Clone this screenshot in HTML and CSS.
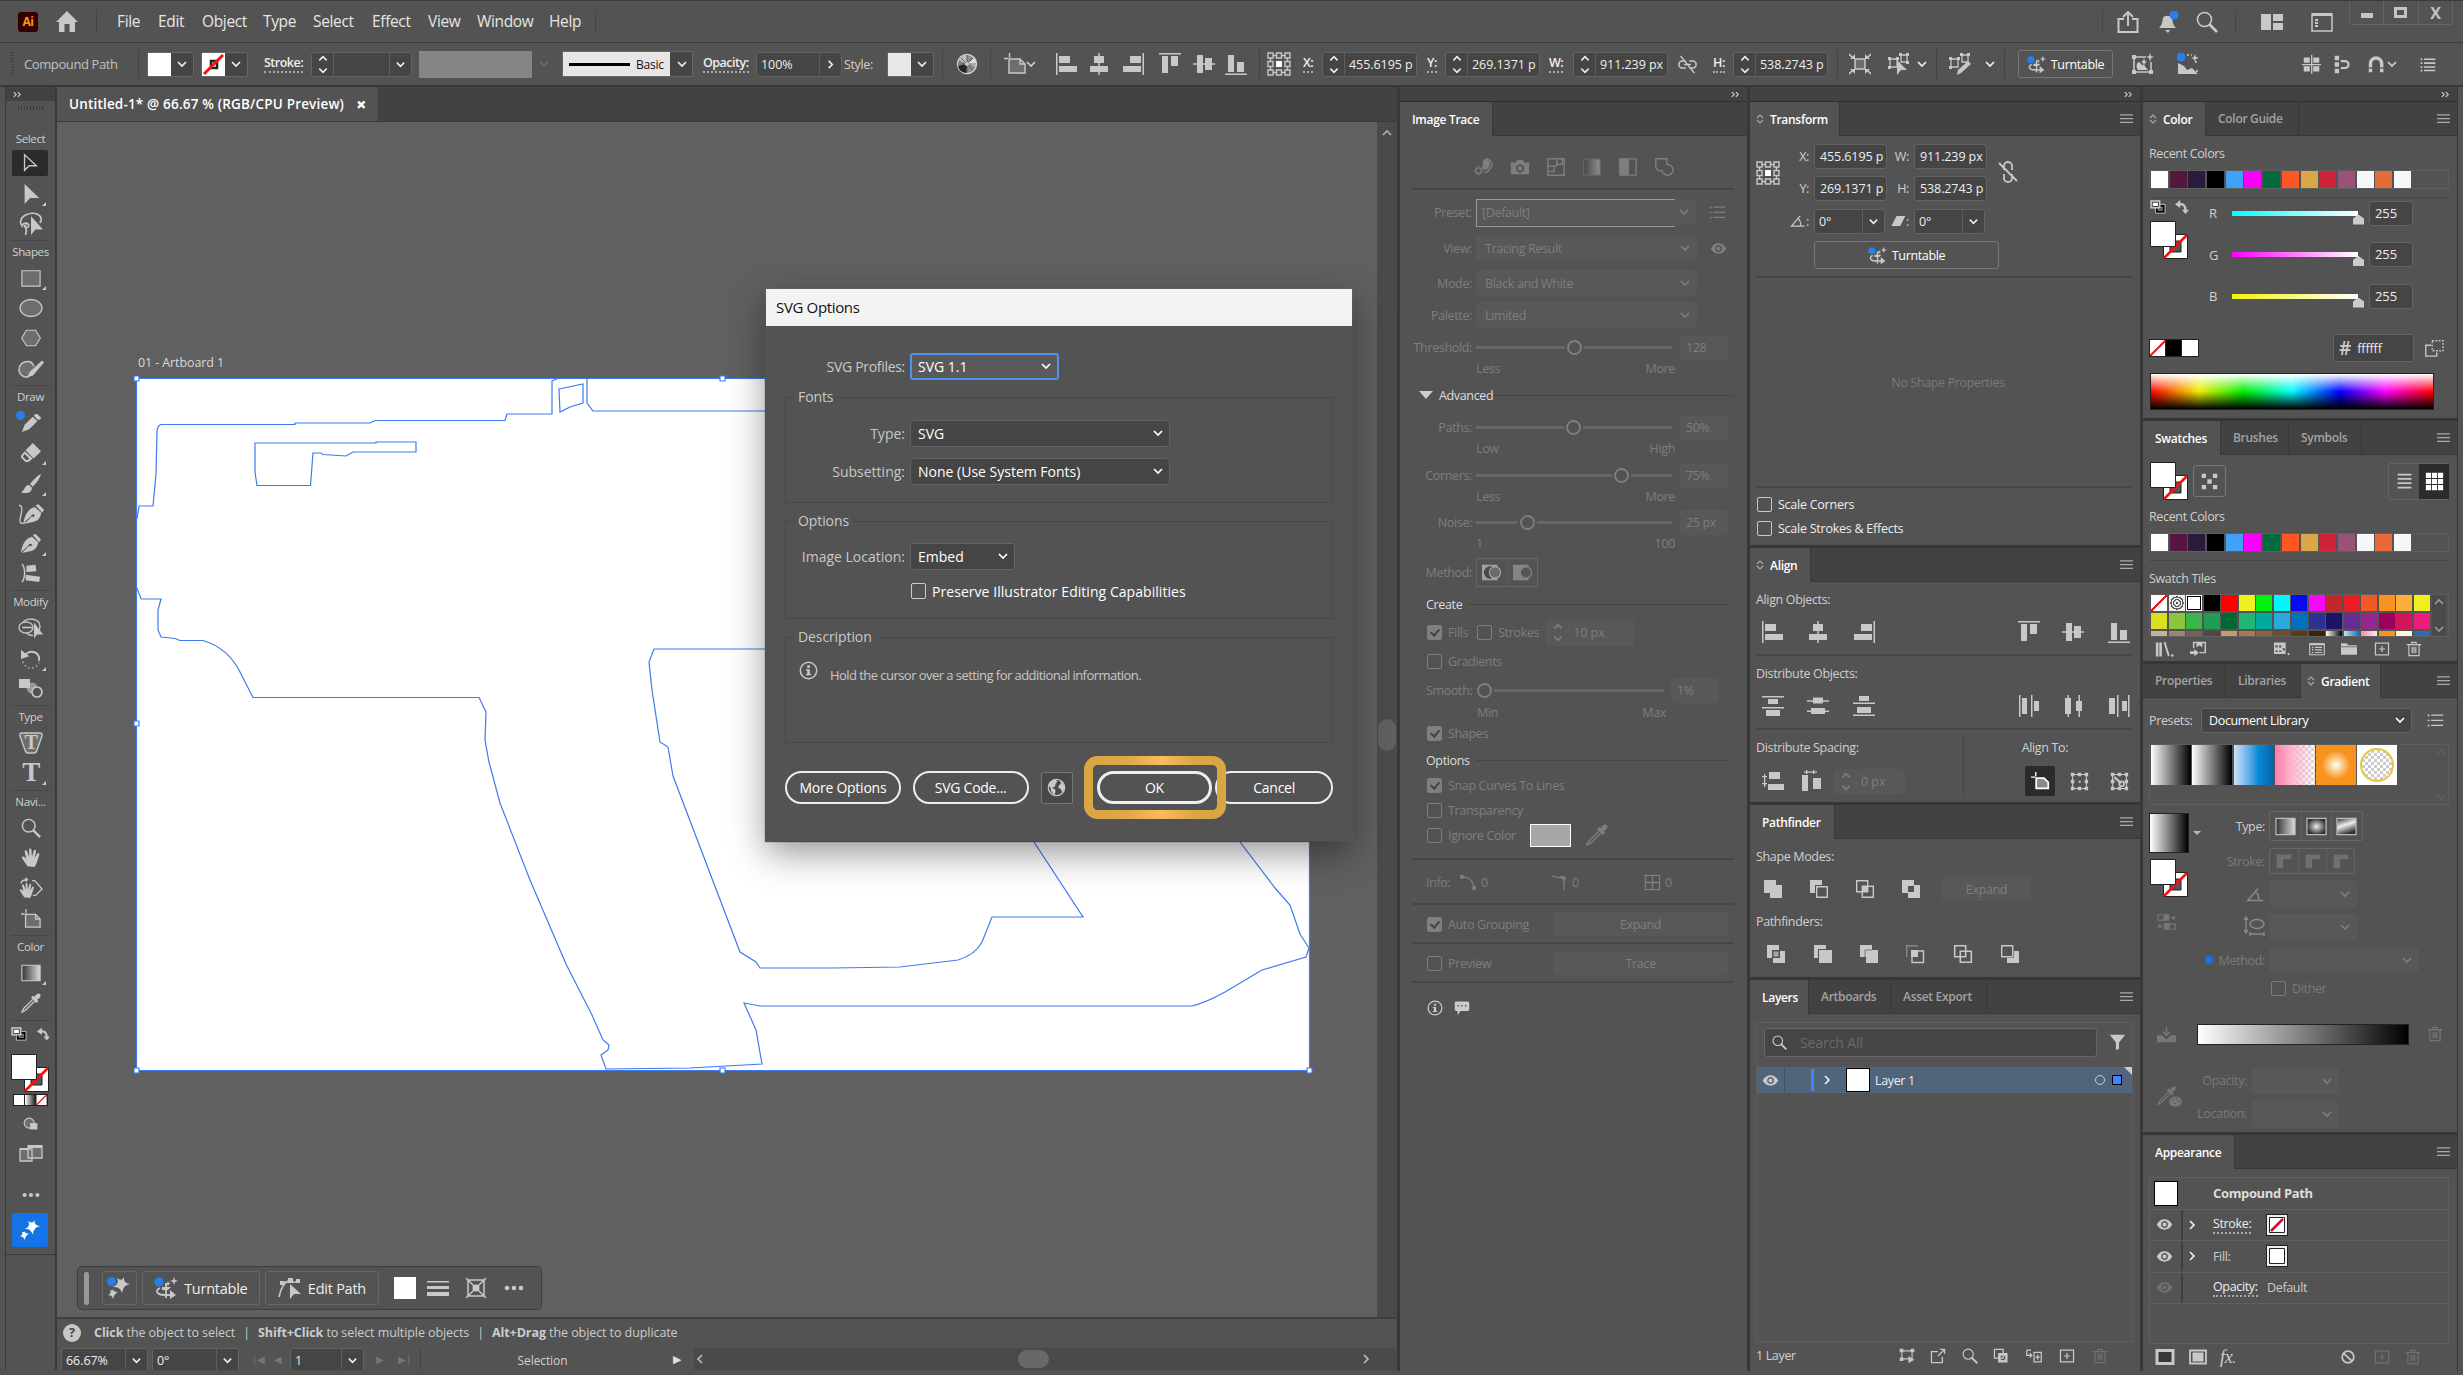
FILE: index.html
```html
<!DOCTYPE html>
<html lang="en">

<head>
<meta charset="utf-8">
<title>Untitled-1* @ 66.67 % (RGB/CPU Preview)</title>
<link rel="stylesheet" href="styles.css">
</head>

<body>

<!-- icon set, all on a 22 grid unless noted -->
<svg class="defs" width="0" height="0">
  <defs>
    <linearGradient id="bw"><stop offset="0" stop-color="#333"/><stop offset="1" stop-color="#ddd"/></linearGradient>
    <radialGradient id="rad"><stop offset="0" stop-color="#eee"/><stop offset="1" stop-color="#333"/></radialGradient>
    <linearGradient id="free" x1="0" y1="0" x2="0.4" y2="1"><stop offset="0" stop-color="#333"/><stop offset=".5" stop-color="#eee"/><stop offset="1" stop-color="#333"/></linearGradient>
    <linearGradient id="gold"><stop offset="0" stop-color="#d8a642"/><stop offset=".3" stop-color="#dfa84a"/><stop offset=".55" stop-color="#fbbb5e"/><stop offset=".8" stop-color="#d8a642"/><stop offset="1" stop-color="#d8a642"/></linearGradient>
  </defs>
  <symbol id="home" viewBox="0 0 22 22"><path d="M11 0 0 11h3v10h5.500v-8h5v8H19V11h3z"/></symbol>
  <symbol id="sel" viewBox="0 0 22 22"><path d="M5 2v17l5-5h8z" fill="none" stroke="currentColor" stroke-width="1.500"/></symbol>
  <symbol id="dsel" viewBox="0 0 22 22"><path d="M4 0v22l6-6.500h10z"/></symbol>
  <symbol id="lasso" viewBox="0 0 22 22"><path d="M2 12C-1 2 12 0 17 2c4 2 4 6 2 8M3 14c-1-4 5-5 6-2 0 3-4 3-4 1 0-1 1-1 2-1M6 14c1 2 1 4 0 7" fill="none" stroke="currentColor" stroke-width="1.500"/><path d="M11 4v17l4-5h7z"/></symbol>
  <symbol id="rect" viewBox="0 0 22 22"><path d="M1 3h20v17H1z" fill="#6e6e6e" stroke="currentColor" stroke-width="1.300"/></symbol>
  <symbol id="ell" viewBox="0 0 24 22"><ellipse cx="12" cy="11" rx="11" ry="8.500" fill="#6e6e6e" stroke="currentColor" stroke-width="1.300"/></symbol>
  <symbol id="hex" viewBox="0 0 22 22"><path d="M6 2.500h10L21.300 11 16 19.500H6L.7 11z" fill="#6e6e6e" stroke="currentColor" stroke-width="1.300"/></symbol>
  <symbol id="shaper" viewBox="0 0 26 22"><path d="M11 18C6 20 1 16 1 11s4-8 9-8c3 0 5 2 6 5" fill="#6e6e6e" stroke="currentColor" stroke-width="1.400"/><path d="m26 4-2-2L12 13l-3 6 6-2z"/></symbol>
  <symbol id="pencil" viewBox="0 0 22 22"><path d="m1 21 3-8L13 4l5 5-9 9zM14 3l2-2h2l4 4v1l-3 2z"/></symbol>
  <symbol id="eraser" viewBox="0 0 22 22"><path d="M13 0 5 8l9 9 8-8zM4 9l-4 5v2l5 5h3l5-4zM4 12l5 5-2 2H6l-4-4z" fill-rule="evenodd"/></symbol>
  <symbol id="brush" viewBox="0 0 22 22"><path d="M22 0c-3 1-8 6-12 11l3 3C18 9 21 4 22 0zM9 12c-5 0-4 5-9 8 5 2 12 1 12-5z"/></symbol>
  <symbol id="pen" viewBox="0 0 22 22"><path d="m13 1 3-1 6 6-2 3zM12 3l7 6c-1 6-4 9-9 10l-9 2 8-8 2 1 1-3-3 0-1 2-8 7C1 13 4 5 12 3z"/></symbol>
  <symbol id="curv" viewBox="0 0 28 22"><g transform="translate(6)"><path d="m13 1 3-1 6 6-2 3zM12 3l7 6c-1 6-4 9-9 10l-9 2 8-8 2 1 1-3-3 0-1 2-8 7C1 13 4 5 12 3z"/></g><path d="M1 1c8 1-2 17 2 19 2 1 4 0 5-1" fill="none" stroke="currentColor" stroke-width="1.400"/></symbol>
  <symbol id="width" viewBox="0 0 22 22"><path d="M1 1c4 4 4 15 0 20" fill="none" stroke="currentColor" stroke-width="1.600"/><path d="m6 3 10-1 1 7-11 1zM5 13l16 2-1 6-15-2z"/></symbol>
  <symbol id="builder" viewBox="0 0 26 22"><ellipse cx="8" cy="11" rx="7" ry="5.500" fill="none" stroke="currentColor" stroke-width="1.300"/><path d="M5 6c3-5 17-5 17 4 0 3-1 4-2 5M9 17c2 2 4 2 6 2M4 11h10" fill="none" stroke="currentColor" stroke-width="1.300"/><path d="M16 6v16l3-4h6z"/></symbol>
  <symbol id="rot" viewBox="0 0 22 22"><path d="M4 8C8 0 21 2 20 13" fill="none" stroke="currentColor" stroke-width="2.200"/><path d="M0 1v10l9-3z"/><path d="M2 14c3 9 14 9 18 1" fill="none" stroke="currentColor" stroke-width="1.500" stroke-dasharray="1.500 3"/></symbol>
  <symbol id="blend" viewBox="0 0 24 22"><path d="M0 2h11v9H0z"/><circle cx="13" cy="11" r="5.500" opacity=".6"/><circle cx="18" cy="15" r="5" fill="#535353" stroke="currentColor" stroke-width="1.700"/></symbol>
  <symbol id="mag" viewBox="0 0 22 22"><circle cx="8.500" cy="8.500" r="7" fill="none" stroke="currentColor" stroke-width="1.600"/><path d="m13 13 8 8" stroke="currentColor" stroke-width="2.600"/></symbol>
  <symbol id="hand" viewBox="0 0 22 22"><path d="M7 20 1 11c0-2 2-2 3-1l2 2L4 4c0-2 2-2 3 0l2 6V2c0-2 2-2 2.500 0l.5 8 2-7c1-2 3-1 2.500 1L15 11l3-5c1-1 3 0 2 2l-3 9-2 4z"/></symbol>
  <symbol id="rotview" viewBox="0 0 26 22"><g transform="translate(0 5) scale(.8)"><path d="M7 20 1 11c0-2 2-2 3-1l2 2L4 4c0-2 2-2 3 0l2 6V2c0-2 2-2 2.500 0l.5 8 2-7c1-2 3-1 2.500 1L15 11l3-5c1-1 3 0 2 2l-3 9-2 4z"/></g><path d="M2 6c1-4 4-4 7-4M7 0l2 2-2 2M14 3l3 0 8 9-7 7h-3" fill="none" stroke="currentColor" stroke-width="1.500"/></symbol>
  <symbol id="artb" viewBox="0 0 22 22"><path d="M5 6h11l5 5v9H5z" fill="#6e6e6e" stroke="currentColor" stroke-width="1.400"/><path d="M16 6v5h5M0 5.500h4M5.500 0v5" fill="none" stroke="currentColor" stroke-width="1.400"/></symbol>
  <symbol id="grad" viewBox="0 0 22 22"><path d="M1 2.500h20v17H1z" fill="url(#bw)" stroke="currentColor" stroke-width="1.300"/></symbol>
  <symbol id="drop" viewBox="0 0 22 22"><path d="M13 7 3 17l-2 4 4-2L15 9" fill="none" stroke="currentColor" stroke-width="1.500"/><path d="m11 5 2-2 2 1c2-4 5-4 6-3s1 4-3 6l1 2-2 2z"/></symbol>
  <symbol id="deffs" viewBox="0 0 18 16"><path d="M6 5h11v10H6z" fill="#000" stroke="#ccc"/><path d="M9 8h5v4H9z" fill="#535353" stroke="#ccc" stroke-width=".6"/><path d="M1 1h10v8H1z" fill="#ddd" stroke="#ccc" stroke-width="1.500"/><path d="M2.500 2.500h7v5h-7z" fill="#fff" stroke="#222"/></symbol>
  <symbol id="swap" viewBox="0 0 16 16"><path d="M4 5c5-1 8 1 8 7" fill="none" stroke="currentColor" stroke-width="2.600"/><path d="M6 0v9L0 5zM8 11h8l-4 5z"/></symbol>
  <symbol id="fs" viewBox="0 0 38 38"><path d="M13.500 13.500h24v24h-24z" fill="#fff" stroke="#222"/><path d="M20 20h11v11H20z" fill="#555" stroke="#222"/><path d="M14 37 37 14" stroke="#f01414" stroke-width="2.600"/><path d="M.5.500h25v25H.5z" fill="#fff" stroke="#222"/></symbol>
  <symbol id="dmode" viewBox="0 0 22 22"><circle cx="9" cy="10" r="5.500" fill="#6e6e6e" stroke="currentColor" stroke-width="1.300"/><path d="M10 10h8v7h-8z"/></symbol>
  <symbol id="screen" viewBox="0 0 24 22"><path d="M1 6h12v12H1zM9 3h14v12H9z" fill="#6e6e6e" stroke="currentColor" stroke-width="1.300"/><path d="M1 5h8v2H1zM9 2h14v3H9z"/></symbol>
  <symbol id="dots" viewBox="0 0 22 22"><circle cx="4" cy="11" r="2.300"/><circle cx="11" cy="11" r="2.300"/><circle cx="18" cy="11" r="2.300"/></symbol>
  <symbol id="spark" viewBox="0 0 22 22"><path d="M16 0Q15 6 22 7 15 8 14 16 12 9 5 10 12 7 9 1 14 5 16 0zM5 12Q5 15 10 15 6 17 5 22 4 18 0 18 4 16 2 13 5 14 5 12z"/></symbol>
  <symbol id="turn" viewBox="0 0 24 22"><path d="M6 11c-5 2-4 7 5 7h7M12 6v15" fill="none" stroke="currentColor" stroke-width="1.800"/><path d="m16 13 6 5-6 4zM8 10h9l-3 3H8z"/><path d="m20 0 1 3 3 1-3 1-1 3-1-3-3-1 3-1zM14 4l.7 2 2 .7-2 .7-.7 2-.7-2-2-.7 2-.7z"/><circle cx="5" cy="5" r="4.500" fill="#2680eb"/></symbol>
  <symbol id="wheel" viewBox="0 0 22 22"><circle cx="11" cy="11" r="9.500" fill="#8c8c8c" stroke="#ccc" stroke-width="1.500"/><path d="M11 11V2a9 9 0 0 0-8 5z" fill="#bbb"/><path d="M11 11 2 13a9 9 0 0 0 8 7z" fill="#222"/><path d="m11 11 7-6a9 9 0 0 1 2 8z" fill="#ddd"/><path d="M11 2v18M2 11h18M5 5l12 12M17 5 5 17" stroke="#444" stroke-width=".7"/><circle cx="11" cy="11" r="2" fill="#ccc"/></symbol>
  <symbol id="al-l" viewBox="0 0 22 22"><path d="M0 0h1.500v22H0zM3 3h11v7H3zM3 13h18v6H3z"/></symbol>
  <symbol id="al-c" viewBox="0 0 22 22"><path d="M10.300 0h1.500v22h-1.500zM6 3h10v7H6zM2 13h18v6H2z"/></symbol>
  <symbol id="al-r" viewBox="0 0 22 22"><path d="M20.500 0H22v22h-1.500zM8 3h11v7H8zM1 13h18v6H1z"/></symbol>
  <symbol id="al-t" viewBox="0 0 22 22"><path d="M0 0h22v1.500H0zM3 3h6v17H3zM12 3h7v10h-7z"/></symbol>
  <symbol id="al-m" viewBox="0 0 22 22"><path d="M0 10.300h22v1.500H0zM4 2h6v18H4zM12 5h7v12h-7z"/></symbol>
  <symbol id="al-b" viewBox="0 0 22 22"><path d="M0 20.500h22V22H0zM3 2h6v17H3zM12 9h7v10h-7z"/></symbol>
  <symbol id="ds-t" viewBox="0 0 22 22"><path d="M0 1h22v1.500H0zM6 4h10v5H6zM0 12h22v1.500H0zM4 15h14v6H4z"/></symbol>
  <symbol id="ds-m" viewBox="0 0 22 22"><path d="M0 5.300h22v1.500H0zM6 2.500h10v6H6zM0 15.500h22V17H0zM4 13h14v6H4z"/></symbol>
  <symbol id="ds-b" viewBox="0 0 22 22"><path d="M0 7.500h22V9H0zM6 1h10v5H6zM0 19.500h22V21H0zM4 12h14v6H4z"/></symbol>
  <symbol id="ds-l" viewBox="0 0 22 22"><path d="M1 0h1.500v22H1zM4 3h5v16H4zM13 0h1.500v22H13zM16 6h5v10h-5z"/></symbol>
  <symbol id="ds-c" viewBox="0 0 22 22"><path d="M5.500 0H7v22H5.500zM3 3h6v16H3zM16.500 0H18v22h-1.500zM14 6h6v10h-6z"/></symbol>
  <symbol id="ds-r" viewBox="0 0 22 22"><path d="M9 0h1.500v22H9zM1 3h6v16H1zM20 0h1.500v22H20zM14 6h5v10h-5z"/></symbol>
  <symbol id="sp-v" viewBox="0 0 22 22"><path d="M7 2h11v7H7zM6 14h16v6H6zM0 6h5v1.300H0zM0 13h5v1.300H0zM2 4h1.300v13H2z"/></symbol>
  <symbol id="sp-h" viewBox="0 0 22 22"><path d="M2 5h6v16H2zM13 8h8v11h-8zM6 0h1.300v4H6zM13 0h1.300v4H13zM4 1.500h13v1.300H4z"/></symbol>
  <symbol id="ref" viewBox="0 0 24 24"><g fill="none" stroke="currentColor" stroke-width="1.400"><path d="M1 1h5v5H1zM9.500 1h5v5h-5zM18 1h5v5h-5zM1 9.500h5v5H1zM18 9.500h5v5h-5zM1 18h5v5H1zM9.500 18h5v5h-5zM18 18h5v5h-5zM6 3.500h3.500M14.500 3.500H18M6 20.500h3.500M14.500 20.500H18M3.500 6v3.500M3.500 14.500V18M20.500 6v3.500M20.500 14.500V18"/></g><path d="M9 9h6v6H9z" fill="#fff"/></symbol>
  <symbol id="unlink" viewBox="0 0 22 22"><path d="M9 7H5a4 4 0 0 0 0 8h4M13 7h4a4 4 0 0 1 0 8h-4M7 11h8M3 1l16 20" fill="none" stroke="currentColor" stroke-width="1.800"/></symbol>
  <symbol id="unlinkv" viewBox="0 0 22 22"><path d="M7 9V5a4 4 0 0 1 8 0v4M7 13v4a4 4 0 0 0 8 0v-4M2 2l18 18" fill="none" stroke="currentColor" stroke-width="1.800"/></symbol>
  <symbol id="iso" viewBox="0 0 22 22"><path d="M6 6h10v10H6z" fill="#6e6e6e" stroke="currentColor" stroke-width="1.500"/><path d="m0 1 4 4M22 1l-4 4M0 21l4-4M22 21l-4-4" stroke="currentColor" stroke-width="1.600"/><path d="M6 6V1L1 6zM16 6V1l5 5zM6 16v5l-5-5zM16 16v5l5-5z"/></symbol>
  <symbol id="selsim" viewBox="0 0 22 22"><path d="M2 6h7v8H2zM13 2h6v7h-6z" fill="none" stroke="currentColor" stroke-width="1.300"/><path d="M0 4h3v3H0zM8 4h3v3H8zM0 13h3v3H0zM11 0h3v3h-3zM18 0h3v3h-3zM18 8h3v3h-3z"/><path d="M9 7v15l4-5h6z"/></symbol>
  <symbol id="editsim" viewBox="0 0 22 22"><path d="M2 6h7v8H2zM13 2h6v7h-6z" fill="none" stroke="currentColor" stroke-width="1.300"/><path d="M0 4h3v3H0zM8 4h3v3H8zM0 13h3v3H0zM11 0h3v3h-3zM18 0h3v3h-3z"/><path d="m19 8 3 3-10 9-4 2 1-5z"/></symbol>
  <symbol id="retype" viewBox="0 0 22 22"><path d="M2 4h12M2 4v15h17V9" fill="none" stroke="currentColor" stroke-width="1.600"/><path d="M0 2h4v4H0zM0 17h4v4H0zM17 17h4v4h-4z"/><path d="M6 9c3 0 3 4 6 3l4 5H6c-2-2-2-5 0-8z"/><path d="m18 0 1 3 3 1-3 1-1 4-1-4-3-1 3-1zM12 5l1 3 2 1-2 1-1 3-1-3-2-1 2-1z"/></symbol>
  <symbol id="mock" viewBox="0 0 22 22"><path d="M1 10v11h20l-6-6-5 2-3-4z"/><path d="M10 2h5M19 8v4M20 17v4" fill="none" stroke="currentColor" stroke-width="1.600" stroke-dasharray="2 2"/><path d="m18 1 1 3 3 1-3 1-1 3-1-3-3-1 3-1z"/><circle cx="4" cy="4" r="4.500" fill="#2680eb"/></symbol>
  <symbol id="snap" viewBox="0 0 22 22"><path d="M2 3h7v6H2zM13 3h7v6h-7zM2 13h7v6H2zM13 13h7v6h-7zM10.500 0H12v22h-1.500zM0 10.500h22V12H0z"/></symbol>
  <symbol id="pix" viewBox="0 0 22 22"><path d="M2 1h5v5H2zM2 8.500h5v5H2zM2 16h5v5H2z"/><path d="M9 7h5a4 4 0 0 1 0 8H9" fill="none" stroke="currentColor" stroke-width="2.500"/></symbol>
  <symbol id="magnet" viewBox="0 0 22 22"><path d="M4 20V10a6 6 0 0 1 13 0v10" fill="none" stroke="currentColor" stroke-width="4"/><path d="M1 15h19" stroke="#535353" stroke-width="1.500"/></symbol>
  <symbol id="list" viewBox="0 0 22 22"><path d="M3 4h2v2H3zM7 4h13v1.800H7zM3 8.500h2v2H3zM7 8.500h13v1.800H7zM3 13h2v2H3zM7 13h13v1.800H7zM3 17h2v2H3zM7 17h13v1.800H7z"/></symbol>
  <symbol id="menu" viewBox="0 0 22 22"><path d="M2 4h2v2H2zM6 4h14v1.500H6zM2 10h2v2H2zM6 10h14v1.500H6zM2 16h2v2H2zM6 16h14v1.500H6z"/></symbol>
  <symbol id="share" viewBox="0 0 22 22"><path d="M7 8H1.500v13h19V8H15M11 15V2M6 6l5-5 5 5" fill="none" stroke="currentColor" stroke-width="2"/></symbol>
  <symbol id="bell" viewBox="0 0 22 22"><path d="M2 17c4-4 3-7 4-10 1-3 8-3 9 0s0 6 4 10zM8 19h5l-2 3z"/><circle cx="17" cy="4" r="4.500" fill="#2680eb"/></symbol>
  <symbol id="work" viewBox="0 0 22 22"><path d="M0 3h10v16H0zM12 3h10v7H12zM12 12h10v7H12z"/></symbol>
  <symbol id="panel" viewBox="0 0 22 22"><path d="M1 3h20v17H1z" fill="none" stroke="currentColor" stroke-width="1.500"/><path d="M1 2h20v3H1zM4 8h3v2H4zM4 11h3v2H4zM4 14h3v2H4z"/></symbol>
  <symbol id="cv" viewBox="0 0 12 12"><path d="m2 4 4 4 4-4" fill="none" stroke="currentColor" stroke-width="1.700"/></symbol>
  <symbol id="cu" viewBox="0 0 12 12"><path d="m2 8 4-4 4 4" fill="none" stroke="currentColor" stroke-width="1.700"/></symbol>
  <symbol id="cr" viewBox="0 0 12 12"><path d="m4 2 4 4-4 4" fill="none" stroke="currentColor" stroke-width="1.700"/></symbol>
  <symbol id="cl" viewBox="0 0 12 12"><path d="M8 2 4 6l4 4" fill="none" stroke="currentColor" stroke-width="1.700"/></symbol>
  <symbol id="ud" viewBox="0 0 8 12"><path d="m1 5 3-3 3 3M1 7l3 3 3-3" fill="none" stroke="currentColor" stroke-width="1.200"/></symbol>
  <symbol id="burger" viewBox="0 0 14 12"><path d="M0 1h14v1.300H0zM0 5h14v1.300H0zM0 9h14v1.300H0z"/></symbol>
  <symbol id="cc" viewBox="0 0 10 8"><path d="m1 1 3 3-3 3M6 1l3 3-3 3" fill="none" stroke="#ddd" stroke-width="1.300"/></symbol>
  <symbol id="auto" viewBox="0 0 22 22"><path d="M10 5c3-6 8-1 7 4s-5 5-8 4" fill="currentColor" stroke="currentColor"/><path d="M13 2c6 0 8 6 6 9s-5 7-8 6" fill="none" stroke="currentColor" stroke-width="1.500"/><circle cx="5" cy="15" r="3" fill="none" stroke="currentColor" stroke-width="1.500"/><path d="M5 9v12M-1 15h12M1 11l8 8M9 11l-8 8" stroke="currentColor" stroke-dasharray="2.500 7"/></symbol>
  <symbol id="cam" viewBox="0 0 22 22"><path fill-rule="evenodd" d="M1 6h5l2-3h6l2 3h5v13H1zM11 8a4.500 4.500 0 1 0 .1 0z"/><circle cx="11" cy="12.500" r="2.500"/></symbol>
  <symbol id="low" viewBox="0 0 22 22"><path d="M2 2h18v18H2zM2 10h10V2M12 8h6V2M9 10v6H2" fill="none" stroke="currentColor" stroke-width="1.600"/></symbol>
  <symbol id="gdim" viewBox="0 0 22 22"><path d="M2 2h18v18H2z" fill="url(#bw)" stroke="currentColor" stroke-width="1.300" opacity=".45"/></symbol>
  <symbol id="bwhite" viewBox="0 0 22 22"><path d="M2 2h18v18H2z" fill="none" stroke="currentColor" stroke-width="1.500"/><path d="M2 2h10v18H2z"/></symbol>
  <symbol id="outl" viewBox="0 0 22 22"><path d="M2 2h12v6c4 0 7 3 7 6s-3 6-6 6-6-2-6-5H5l-3-3z" fill="none" stroke="currentColor" stroke-width="1.600"/></symbol>
  <symbol id="eye" viewBox="0 0 22 22"><path fill-rule="evenodd" d="M2 11c4-8 14-8 18 0-4 8-14 8-18 0zm9-4a4 4 0 1 0 .1 0z"/><circle cx="11" cy="11" r="2.300"/></symbol>
  <symbol id="abut" viewBox="0 0 22 22"><path d="M0 2h18v18H0z" fill="#a0a0a0"/><path d="M13 5a7 7 0 1 0 0 12z" fill="#484848"/><circle cx="15" cy="11" r="6.500" fill="#6a6a6a" stroke="#a0a0a0" stroke-width="1.400"/></symbol>
  <symbol id="over" viewBox="0 0 22 22"><path d="M0 2h18v18H0z" fill="#858585"/><circle cx="15" cy="11" r="6.500" fill="#555" stroke="#858585" stroke-width="1.400"/></symbol>
  <symbol id="curve" viewBox="0 0 18 18"><path d="M3 3c6 0 11 4 12 12" fill="none" stroke="currentColor" stroke-width="1.400"/><path d="M0 1h4v4H0zM13 13h4v4h-4z"/></symbol>
  <symbol id="corner" viewBox="0 0 18 18"><path d="M1 2c6 1 10 4 15 3M13 6c1 4 1 6 1 11" fill="none" stroke="currentColor" stroke-width="1.400"/><path d="M9 2h6v6z"/></symbol>
  <symbol id="cells" viewBox="0 0 18 18"><path d="M1.500 1.500h15v15h-15zM9 1v16M1 9h16" fill="none" stroke="currentColor" stroke-width="1.400"/></symbol>
  <symbol id="info" viewBox="0 0 22 22"><circle cx="11" cy="11" r="9.500" fill="none" stroke="currentColor" stroke-width="1.700"/><path d="M9.500 5h3v3h-3zM8 9.500h4.500V15H14v1.500H8V15h1.500v-4H8z"/></symbol>
  <symbol id="bubble" viewBox="0 0 22 22"><path fill-rule="evenodd" d="M3 2h16q2 0 2 2v9q0 2-2 2H9l-4 6v-6H3q-2 0-2-2V4q0-2 2-2zm2 5v2h2V7zm5 0v2h2V7zm5 0v2h2V7z"/></symbol>
  <symbol id="angle" viewBox="0 0 22 22"><path d="M14 4 2 18h18M11 8c3 2 4 6 4 10" fill="none" stroke="currentColor" stroke-width="1.700"/></symbol>
  <symbol id="shear" viewBox="0 0 22 22"><path d="M9 4h12l-7 14H2z"/></symbol>
  <symbol id="aspect" viewBox="0 0 22 22"><ellipse cx="14" cy="8" rx="7" ry="4.500" fill="none" stroke="currentColor" stroke-width="1.500"/><path d="M3 2v14M1 4l2-3 2 3M1 14l2 3 2-3M7 18h14M7 16v4M21 16v4" fill="none" stroke="currentColor" stroke-width="1.400"/></symbol>
  <symbol id="rev" viewBox="0 0 22 22"><path d="M1 3h12v6H1zM8 13h12v6H8z" fill="none" stroke="currentColor" stroke-width="1.300"/><path d="M7 3h6v6H7zM8 13h6v6H8zM15 5h6l-3 4zM0 17h6l-3-4z"/></symbol>
  <symbol id="al-ab" viewBox="0 0 22 22"><path d="M6 7h9l5 5v7H6z" fill="#8a8a8a" stroke="#fff" stroke-width="2"/><path d="M0 6h5M5.500 0v5" stroke="#fff" stroke-width="1.600"/></symbol>
  <symbol id="al-sel" viewBox="0 0 22 22"><path d="M3 3h16v16H3z" fill="none" stroke="currentColor" stroke-width="1.200"/><path d="M1 1h4v4H1zM9 1h4v4H9zM17 1h4v4h-4zM1 9h4v4H1zM17 9h4v4h-4zM1 17h4v4H1zM9 17h4v4H9zM17 17h4v4h-4zM10 10h2.500v2.500H10z"/></symbol>
  <symbol id="al-key" viewBox="0 0 22 22"><path d="M3 3h16v16H3z" fill="none" stroke="currentColor" stroke-width="1.200"/><path d="M1 1h4v4H1zM9 1h4v4H9zM17 1h4v4h-4zM1 9h4v4H1zM17 9h4v4h-4zM1 17h4v4H1zM9 17h4v4H9zM17 17h4v4h-4z"/><path d="m5 6 8 7" stroke="currentColor" stroke-width="2.500"/><circle cx="13.500" cy="13.500" r="2.800" fill="none" stroke="currentColor" stroke-width="2"/></symbol>
  <symbol id="p-unite" viewBox="0 0 22 22"><path d="M2 2h12v5h6v13H8v-5H2z"/></symbol>
  <symbol id="p-minus" viewBox="0 0 22 22"><path d="M2 2h12v5H7v8H2z"/><path d="M8.700 8.700h10.600v10.600H8.700z" fill="none" stroke="currentColor" stroke-width="1.400"/></symbol>
  <symbol id="p-inter" viewBox="0 0 22 22"><path d="M2.700 2.700h11v11h-11zM8.300 8.300h11v11h-11z" fill="none" stroke="currentColor" stroke-width="1.400"/><path d="M8 8h6v6H8z"/></symbol>
  <symbol id="p-excl" viewBox="0 0 22 22"><path fill-rule="evenodd" d="M2 2h12v5h6v13H8v-5H2zm6 6v6h6V8z"/></symbol>
  <symbol id="p-div" viewBox="0 0 22 22"><path d="M2 2h12v5H7v8H2zM15 8h5v12H8v-5h7z"/><path d="M8.500 8.500h5v5h-5z" opacity=".7"/></symbol>
  <symbol id="p-trim" viewBox="0 0 22 22"><path d="M2 2h12v4H6v9H2z"/><path d="M7 7h13v13H7z"/></symbol>
  <symbol id="p-merge" viewBox="0 0 22 22"><path d="M2 2h12v5h6v13H8v-6H2z"/><path d="M7 15V7h7" fill="none" stroke="#535353" stroke-width=".7"/></symbol>
  <symbol id="p-crop" viewBox="0 0 22 22"><path d="M2.700 14V2.700H14" fill="none" stroke="#888" stroke-width="1.400"/><path d="M14 8h5.500v11.500H8V14" fill="none" stroke="currentColor" stroke-width="1.400"/><path d="M7 7h7v7H7z"/></symbol>
  <symbol id="p-out" viewBox="0 0 22 22"><path d="M2.700 2.700h11v11h-11zM8.300 8.300h11v11h-11z" fill="none" stroke="currentColor" stroke-width="1.600"/></symbol>
  <symbol id="p-back" viewBox="0 0 22 22"><path d="M2.700 2.700h11v11h-11z" fill="none" stroke="currentColor" stroke-width="1.400"/><path d="M15 8h5v12H8v-5h7z"/></symbol>
  <symbol id="funnel" viewBox="0 0 22 22"><path d="M1 1h20l-8 10v8l-4 2V11z"/></symbol>
  <symbol id="trash" viewBox="0 0 22 22"><path d="M4 6v14h14V6M1 5h20M8 4V2h6v2M8.500 8v9M11 8v9M13.500 8v9" fill="none" stroke="currentColor" stroke-width="1.600"/></symbol>
  <symbol id="plus" viewBox="0 0 22 22"><path d="M2 3h18v16H2zM11 7v8M7 11h8" fill="none" stroke="currentColor" stroke-width="1.700"/></symbol>
  <symbol id="folder" viewBox="0 0 22 22"><path d="M0 3h8l2 3h12v13H0z"/><path d="M0 8h22" stroke="#535353"/></symbol>
  <symbol id="opts" viewBox="0 0 22 22"><path d="M1 4h20v15H1z" fill="none" stroke="currentColor" stroke-width="1.500"/><path d="M1 3h20v3H1zM4 8h2v2H4zM8 8h10v1.500H8zM4 11h2v2H4zM8 11.500h10V13H8zM4 15h2v2H4zM8 15h10v1.500H8z"/></symbol>
  <symbol id="kinds" viewBox="0 0 22 22"><path fill-rule="evenodd" d="M0 2h16v16H0zm2 7h3V6H2zm5 0h3V6H7zm5 4h3v-3h-3zM2 15h3v-2H2zm5 0h3v-2H7z"/><circle cx="20" cy="18" r="1.500"/></symbol>
  <symbol id="libs" viewBox="0 0 22 22"><path d="M1 3h3v16H1zM5 3h3v16H5zM10 3l2-1 5 16-2 1z"/><circle cx="20" cy="18" r="1.500"/></symbol>
  <symbol id="addlib" viewBox="0 0 22 22"><path d="M5 10V2h16v14h-8" fill="none" stroke="currentColor" stroke-width="2"/><path d="M9 2h8v7l-4-3-4 3zM0 14h6v-3l6 5-6 5v-3H0z"/></symbol>
  <symbol id="cube" viewBox="0 0 22 22"><path d="M8 8H2v12h12v-4" fill="none" stroke="currentColor" stroke-width="1.500"/><path d="M9 3h12v11H9z" fill="none" stroke="currentColor" stroke-width="1.500" stroke-dasharray="2 1.600"/></symbol>
  <symbol id="kuler" viewBox="0 0 22 22"><path d="M2 2h5v5H2zM15 2h5v5h-5zM8.500 8.500h5v5h-5zM2 15h5v5H2zM15 15h5v5h-5z"/></symbol>
  <symbol id="lines" viewBox="0 0 22 22"><path d="M3 2h16v2H3zM3 7h16v2H3zM3 12h16v2H3zM3 17h16v2H3z"/></symbol>
  <symbol id="nine" viewBox="0 0 22 22"><path d="M1 1h6v6H1zM8 1h6v6H8zM15 1h6v6h-6zM1 8h6v6H1zM8 8h6v6H8zM15 8h6v6h-6zM1 15h6v6H1zM8 15h6v6H8zM15 15h6v6h-6z"/></symbol>
  <symbol id="down" viewBox="0 0 22 22"><path d="M0 12h6l5 5 5-5h6v8H0z"/><path d="M11 2v9M7 8l4 4 4-4" fill="none" stroke="currentColor" stroke-width="1.700"/></symbol>
  <symbol id="picker" viewBox="0 0 28 24"><g transform="scale(.95)"><path d="M13 7 3 17l-2 4 4-2L15 9" fill="none" stroke="currentColor" stroke-width="1.500"/><path d="m11 5 2-2 2 1c2-4 5-4 6-3s1 4-3 6l1 2-2 2z"/></g><ellipse cx="20" cy="17" rx="7" ry="5.500"/><path d="M16 15h2M20 14h2M23 17h2M18 19h2" stroke="#535353" stroke-width="1.500"/></symbol>
  <symbol id="slash" viewBox="0 0 20 20"><path d="M0 0h20v20H0z" fill="#fff"/><path d="M0 20 20 0" stroke="#f01414" stroke-width="2.500"/></symbol>
  <symbol id="noline" viewBox="0 0 23 23"><path d="M0 0h23v23H0z" fill="#fff"/><path d="M9 8h6v7H9z" fill="none" stroke="#222" stroke-width="2.500"/><path d="M2 21 21 2" stroke="#f01414" stroke-width="3"/></symbol>
  <symbol id="sq" viewBox="0 0 22 22"><path d="M3 4.500h16v13H3z" fill="#383838" stroke="currentColor" stroke-width="3"/></symbol>
  <symbol id="sqf" viewBox="0 0 22 22"><path d="M3 4.500h16v13H3z" fill="none" stroke="currentColor" stroke-width="1.800"/><path d="M5.500 6.500h11v9h-11z"/></symbol>
  <symbol id="nope" viewBox="0 0 22 22"><circle cx="11" cy="11" r="8" fill="none" stroke="currentColor" stroke-width="2.400"/><path d="m5 6 12 11" stroke="currentColor" stroke-width="2.400"/></symbol>
  <symbol id="globe" viewBox="0 0 22 22"><circle cx="11" cy="11" r="9.500" fill="none" stroke="currentColor" stroke-width="1.400"/><path d="M3 5 9 1l3 3-2 3-1 3-3 1 4 3-1 6-4-4-1-5-2-2zM15 3l5 5 1 4-3 5-2-4-3-2 1-3 2-1z"/></symbol>
  <symbol id="export" viewBox="0 0 22 22"><path d="M11 5H2v15h15v-8M11 11l9-9M14 2h6v6" fill="none" stroke="currentColor" stroke-width="1.800"/></symbol>
  <symbol id="mask" viewBox="0 0 22 22"><path d="M2 2h12v12H2z" fill="none" stroke="currentColor" stroke-width="1.700"/><path fill-rule="evenodd" d="M7 7h13v13H7zm6.500 3a3.500 3.500 0 1 0 .1 0z"/></symbol>
  <symbol id="sublayer" viewBox="0 0 22 22"><path d="M1 3v7h7M5 7l3 3-3 3M1 3h6M11 6h10v13H11zM16 9v7M13 12.500h6" fill="none" stroke="currentColor" stroke-width="1.700"/></symbol>
  <symbol id="collect" viewBox="0 0 22 22"><path d="M4 4h14v11H4z" fill="none" stroke="currentColor" stroke-width="1.500"/><path d="M1 1h5v5H1zM16 1h5v5h-5zM1 13h5v5H1zM13 11l8 5-8 5z"/></symbol>
  <symbol id="editp" viewBox="0 0 24 22"><path d="M1 20C3 10 6 5 12 3M5 5h14" fill="none" stroke="currentColor" stroke-width="1.600"/><path d="M10 1h5v5h-5zM2 4h4v4H2zM18 2h4v4h-4zM12 7v15l4-5h7z"/></symbol>
  <symbol id="wts" viewBox="0 0 22 22"><path d="M0 4h22v1.500H0zM0 9h22v3H0zM0 15h22v4H0z"/></symbol>
  <symbol id="cross" viewBox="0 0 22 22"><path d="M3 3h16v16H3zM1 1l20 20M1 21 21 1" fill="none" stroke="currentColor" stroke-width="1.500"/><circle cx="11" cy="11" r="3.500"/></symbol>
</svg>

<header class="titlebar">
  <b class="ai">Ai</b>
  <svg class="i"><use href="#home"/></svg>
  <i class="vr"></i>
  <span>File</span><span>Edit</span><span>Object</span><span>Type</span><span>Select</span><span>Effect</span><span>View</span><span>Window</span><span>Help</span>
  <i class="vr"></i>
  <i class="vr"></i>
  <svg class="i"><use href="#share"/></svg>
  <svg class="i"><use href="#bell"/></svg>
  <svg class="i"><use href="#mag"/></svg>
  <i class="vr"></i>
  <svg class="i"><use href="#work"/></svg>
  <svg class="i"><use href="#panel"/></svg>
  <div class="winbtns"><span><i class="min"></i></span><span><i class="max"></i></span><span>X</span></div>
</header>

<div class="control">
  <i class="grip"></i>
  <span class="lbl">Compound Path</span>
  <i class="vr"></i>
  <div class="combo"><i class="chip white"></i><svg class="c"><use href="#cv"/></svg></div>
  <div class="combo"><svg class="chip"><use href="#noline"/></svg><svg class="c"><use href="#cv"/></svg></div>
  <u class="dot">Stroke:</u>
  <div class="spin w101"><em><svg><use href="#cu"/></svg><svg><use href="#cv"/></svg></em><span></span><svg class="c cell"><use href="#cv"/></svg></div>
  <div class="varw"><i></i><svg class="c dim"><use href="#cv"/></svg></div>
  <div class="basic"><div><i></i>Basic</div><svg class="c"><use href="#cv"/></svg></div>
  <u class="dot">Opacity:</u>
  <div class="spin w86"><span>100%</span><svg class="c cell"><use href="#cr"/></svg></div>
  <span>Style:</span>
  <div class="combo"><i class="chip light"></i><svg class="c"><use href="#cv"/></svg></div>
  <i class="vr"></i>
  <svg class="i"><use href="#wheel"/></svg>
  <i class="vr"></i>
  <div class="pair doc-set"><svg class="i"><use href="#artb"/></svg><svg class="c"><use href="#cv"/></svg></div>
  <svg class="i"><use href="#al-l"/></svg>
  <svg class="i"><use href="#al-c"/></svg>
  <svg class="i"><use href="#al-r"/></svg>
  <svg class="i"><use href="#al-t"/></svg>
  <svg class="i"><use href="#al-m"/></svg>
  <svg class="i"><use href="#al-b"/></svg>
  <i class="vr"></i>
  <svg class="i24"><use href="#ref"/></svg>
  <u class="dot">X:</u>
  <div class="spin"><em><svg><use href="#cu"/></svg><svg><use href="#cv"/></svg></em><span>455.6195 p</span></div>
  <u class="dot">Y:</u>
  <div class="spin"><em><svg><use href="#cu"/></svg><svg><use href="#cv"/></svg></em><span>269.1371 p</span></div>
  <u class="dot">W:</u>
  <div class="spin"><em><svg><use href="#cu"/></svg><svg><use href="#cv"/></svg></em><span>911.239 px</span></div>
  <svg class="i20"><use href="#unlink"/></svg>
  <u class="dot">H:</u>
  <div class="spin"><em><svg><use href="#cu"/></svg><svg><use href="#cv"/></svg></em><span>538.2743 p</span></div>
  <i class="vr"></i>
  <svg class="i"><use href="#iso"/></svg>
  <div class="pair"><svg class="i"><use href="#selsim"/></svg><svg class="c lit"><use href="#cv"/></svg></div>
  <i class="vr"></i>
  <div class="pair wide"><svg class="i"><use href="#editsim"/></svg><svg class="c lit"><use href="#cv"/></svg></div>
  <i class="vr"></i>
  <div class="turnbtn"><svg class="i20"><use href="#turn"/></svg>Turntable</div>
  <svg class="i"><use href="#retype"/></svg>
  <svg class="i"><use href="#mock"/></svg>
  <svg class="i20"><use href="#snap"/></svg>
  <svg class="i20"><use href="#pix"/></svg>
  <div class="pair tight"><svg class="i20"><use href="#magnet"/></svg><svg class="c"><use href="#cv"/></svg></div>
  <svg class="i20"><use href="#list"/></svg>
</div>

<main>

<aside class="tools">
  <div class="toolhead"><svg class="cc"><use href="#cc"/></svg></div>
  <div class="toolgrip"></div>
  <div class="toolgrid stack">
    <p>Select</p>
    <div class="on"><svg class="i"><use href="#sel"/></svg></div>
    <div class="fly"><svg class="i"><use href="#dsel"/></svg></div>
    <div><svg class="i24"><use href="#lasso"/></svg></div>
    <div class="sep"></div>
    <p>Shapes</p>
    <div class="fly"><svg class="i"><use href="#rect"/></svg></div>
    <div><svg class="i24"><use href="#ell"/></svg></div>
    <div><svg class="i"><use href="#hex"/></svg></div>
    <div><svg class="i26"><use href="#shaper"/></svg></div>
    <div class="sep"></div>
    <p>Draw</p>
    <div class="new"><svg class="i"><use href="#pencil"/></svg></div>
    <div class="fly"><svg class="i"><use href="#eraser"/></svg></div>
    <div class="fly"><svg class="i"><use href="#brush"/></svg></div>
    <div><svg class="i26"><use href="#curv"/></svg></div>
    <div class="fly"><svg class="i"><use href="#pen"/></svg></div>
    <div><svg class="i"><use href="#width"/></svg></div>
    <div class="sep"></div>
    <p>Modify</p>
    <div><svg class="i26"><use href="#builder"/></svg></div>
    <div class="fly"><svg class="i"><use href="#rot"/></svg></div>
    <div><svg class="i24"><use href="#blend"/></svg></div>
    <div class="sep"></div>
    <p>Type</p>
    <div><svg class="i24" viewBox="0 0 24 22"><path d="M3 1h18c2 0 2.500 1 2 3l-5 14c-.5 2-1 3-3 3H9c-2 0-2.500-1-3-3L1 4C.5 2 1 1 3 1z" fill="#6e6e6e" stroke="currentColor" stroke-width="1.400"/><text x="12" y="17" class="glyph" font-size="20">T</text></svg></div>
    <div class="fly"><svg class="i24" viewBox="0 0 24 22"><text x="12" y="19" class="glyph" font-size="27">T</text></svg></div>
    <div class="sep"></div>
    <p>Navi...</p>
    <div><svg class="i"><use href="#mag"/></svg></div>
    <div><svg class="i"><use href="#hand"/></svg></div>
    <div><svg class="i24"><use href="#rotview"/></svg></div>
    <div><svg class="i"><use href="#artb"/></svg></div>
    <div class="sep"></div>
    <p>Color</p>
    <div class="fly"><svg class="i"><use href="#grad"/></svg></div>
    <div><svg class="i"><use href="#drop"/></svg></div>
    <div class="sep"></div>
    <div class="defswap"><svg><use href="#deffs"/></svg><svg><use href="#swap"/></svg></div>
    <div><svg class="fs"><use href="#fs"/></svg></div>
    <div class="strip"><i class="white"></i><i class="fade"></i><svg><use href="#slash"/></svg></div>
    <div><svg class="i"><use href="#dmode"/></svg></div>
    <div><svg class="i24"><use href="#screen"/></svg></div>
    <div><svg class="i"><use href="#dots"/></svg></div>
    <div class="aibtn"><svg class="i"><use href="#spark"/></svg></div>
  </div>
</aside>

<section class="doc">
  <div class="doctabs"><div class="doctab">Untitled-1* @ 66.67 % (RGB/CPU Preview)<b>×</b></div></div>
  <div class="docrow">
    <div class="canvas">
      <svg class="art" viewBox="57 122 1320 1192">
        <text x="138" y="367" class="abname">01 - Artboard 1</text>
        <path d="M136.500 378.500h1173v692h-1173z" fill="#fff" stroke="#4d4d4d"/>
        <g fill="none" stroke="#3f7af0" stroke-width="1.200">
          <path d="M136.500 378.500h1173v692h-1173z"/>
          <path d="M137 519 139 506H153L156 474 157 432Q157 426 161 424.500H295V423H370L375 420.500H505L507 414H552V381L558 378.500H587V403L593 411H800"/>
          <path d="M559 389 583 384V403L570 407 560 412Z"/>
          <path d="M255 443H376V442H416V452H353L346 456 323 454.500 321 453H313L310.500 485.500H257L255 472Z"/>
          <path d="M137 588 141 599H161L158 610V630L161 637 175 638.500 180 640.500H203Q228 648 240 672L253 697.500H479L486 712 485 740 489 762 500 803 530 880 566 964 592 1015 603 1040 609 1045 608 1050 601 1055 606 1069 690 1068 762 1064 756 1030 744 1003 760 1006H1192Q1205 1003 1225 992L1262 970 1306 957 1309 948 1300 934 1290 905 1275 888 1240 842"/>
          <path d="M766 649H654L649 662 652 690 660 742 668 747 673 776 740 952 756 962 760 968H833L900 967 958 960Q975 955 982 942L992 917H1083L1034 842"/>
          <g fill="#fff"><path d="M134 376h5v5h-5zM720 376h5v5h-5zM134 721h5v5h-5zM134 1068h5v5h-5zM720 1068h5v5h-5zM1307 1068h5v5h-5zM1307 721h5v5h-5z"/></g>
        </g>
      </svg>
      <div class="ctxbar">
        <i class="handle"></i>
        <div class="btn"><svg class="i"><use href="#spark"/></svg></div>
        <div class="btn"><svg class="i24"><use href="#turn"/></svg>Turntable</div>
        <div class="btn"><svg class="i24"><use href="#editp"/></svg>Edit Path</div>
        <i class="white sw"></i>
        <svg class="i"><use href="#wts"/></svg>
        <svg class="i"><use href="#cross"/></svg>
        <svg class="i"><use href="#dots"/></svg>
      </div>
    </div>
    <div class="vscroll"><svg class="c"><use href="#cu"/></svg><i></i><svg class="c"><use href="#cv"/></svg></div>
  </div>
  <div class="hint"><b class="q">?</b><span><b>Click</b> the object to select</span><i>|</i><span><b>Shift+Click</b> to select multiple objects</span><i>|</i><span><b>Alt+Drag</b> the object to duplicate</span></div>
  <div class="status">
    <div class="spin sz"><span>66.67%</span><svg class="c cell"><use href="#cv"/></svg></div>
    <div class="spin sr"><span>0°</span><svg class="c cell"><use href="#cv"/></svg></div>
    <span class="nav">|◀</span><span class="nav">◀</span>
    <div class="spin sa"><span>1</span><svg class="c cell"><use href="#cv"/></svg></div>
    <span class="nav">▶</span><span class="nav">▶|</span>
    <span class="mode">Selection</span>
    <span class="play">▶</span>
    <div class="hscroll"><svg class="c"><use href="#cl"/></svg><i></i><svg class="c"><use href="#cr"/></svg></div>
  </div>
</section>

<div class="dock d1">
  <div class="dockhead"><svg class="cc"><use href="#cc"/></svg></div>
  <section class="panel trace">
    <div class="tabs"><b class="tab act w93">Image Trace</b></div>
    <div class="stack body">
      <div class="presets"><svg class="i"><use href="#auto"/></svg><svg class="i"><use href="#cam"/></svg><svg class="i"><use href="#low"/></svg><svg class="i"><use href="#gdim"/></svg><svg class="i"><use href="#bwhite"/></svg><svg class="i"><use href="#outl"/></svg></div>
      <div class="sep"></div>
      <div class="frm"><label>Preset:</label><div class="dd foc">[Default]<svg class="c"><use href="#cv"/></svg></div><svg class="i20"><use href="#menu"/></svg></div>
      <div class="frm"><label>View:</label><div class="dd">Tracing Result<svg class="c"><use href="#cv"/></svg></div><svg class="i20"><use href="#eye"/></svg></div>
      <div class="frm"><label>Mode:</label><div class="dd">Black and White<svg class="c"><use href="#cv"/></svg></div></div>
      <div class="frm"><label>Palette:</label><div class="dd">Limited<svg class="c"><use href="#cv"/></svg></div></div>
      <div class="frm"><label>Threshold:</label><div class="rail"><i class="k50"></i></div><div class="val">128</div></div>
      <div class="ends"><span>Less</span><span>More</span></div>
      <div class="head adv"><i class="tri"></i>Advanced</div>
      <div class="frm"><label>Paths:</label><div class="rail"><i class="k49"></i></div><div class="val">50%</div></div>
      <div class="ends"><span>Low</span><span>High</span></div>
      <div class="frm"><label>Corners:</label><div class="rail"><i class="k74"></i></div><div class="val">75%</div></div>
      <div class="ends"><span>Less</span><span>More</span></div>
      <div class="frm"><label>Noise:</label><div class="rail"><i class="k26"></i></div><div class="val">25 px</div></div>
      <div class="ends"><span>1</span><span>100</span></div>
      <div class="frm"><label>Method:</label><div class="two"><i><svg class="i20"><use href="#abut"/></svg></i><i><svg class="i20"><use href="#over"/></svg></i></div></div>
      <div class="head in">Create</div>
      <div class="in"><i class="cb ck"></i>Fills<i class="cb gap"></i>Strokes<div class="spin off"><em><svg><use href="#cu"/></svg><svg><use href="#cv"/></svg></em><span>10 px</span></div></div>
      <div class="in"><i class="cb"></i>Gradients</div>
      <div class="in smooth"><span>Smooth:</span><div class="rail"><i class="k0"></i></div><div class="val">1%</div></div>
      <div class="ends sm"><span>Min</span><span>Max</span></div>
      <div class="in"><i class="cb ck"></i>Shapes</div>
      <div class="head in">Options</div>
      <div class="in"><i class="cb ck"></i>Snap Curves To Lines</div>
      <div class="in"><i class="cb"></i>Transparency</div>
      <div class="in"><i class="cb"></i>Ignore Color<i class="ign"></i><svg class="i"><use href="#drop"/></svg></div>
      <div class="sep"></div>
      <div class="in infos"><span>Info:</span><span><svg><use href="#curve"/></svg>0</span><span><svg><use href="#corner"/></svg>0</span><span><svg><use href="#cells"/></svg>0</span></div>
      <div class="sep"></div>
      <div class="in split"><i class="cb ck"></i>Auto Grouping<div class="big">Expand</div></div>
      <div class="sep"></div>
      <div class="in split"><i class="cb"></i>Preview<div class="big">Trace</div></div>
      <div class="sep"></div>
      <div class="in foot"><svg class="i18"><use href="#info"/></svg><svg class="i18"><use href="#bubble"/></svg></div>
    </div>
  </section>
</div>

<div class="dock d2">
  <div class="dockhead"><svg class="cc"><use href="#cc"/></svg></div>
  <section class="panel transform">
    <div class="tabs"><b class="tab act w89"><svg class="ud"><use href="#ud"/></svg>Transform</b><svg class="burger"><use href="#burger"/></svg></div>
    <div class="stack body">
      <div class="xy">
        <svg class="i24"><use href="#ref"/></svg>
        <div class="xyf">
          <label>X:</label><div class="fld">455.6195 p</div><label>W:</label><div class="fld">911.239 px</div>
          <label>Y:</label><div class="fld">269.1371 p</div><label>H:</label><div class="fld">538.2743 p</div>
          <label><svg class="i18"><use href="#angle"/></svg>:</label><div class="spin w71"><span>0°</span><svg class="c cell"><use href="#cv"/></svg></div><label><svg class="i18"><use href="#shear"/></svg>:</label><div class="spin w71"><span>0°</span><svg class="c cell"><use href="#cv"/></svg></div>
        </div>
        <svg class="i"><use href="#unlinkv"/></svg>
      </div>
      <div class="tt"><div class="turnbtn"><svg class="i20"><use href="#turn"/></svg>Turntable</div></div>
      <div class="sep"></div>
      <div class="noshape">No Shape Properties</div>
      <div class="sep"></div>
      <div class="chk"><i class="cb"></i>Scale Corners</div>
      <div class="chk"><i class="cb"></i>Scale Strokes &amp; Effects</div>
    </div>
  </section>
  <section class="panel align">
    <div class="tabs"><b class="tab act w61"><svg class="ud"><use href="#ud"/></svg>Align</b><svg class="burger"><use href="#burger"/></svg></div>
    <div class="stack body">
      <div>Align Objects:</div>
      <div class="six"><svg class="i"><use href="#al-l"/></svg><svg class="i"><use href="#al-c"/></svg><svg class="i"><use href="#al-r"/></svg><svg class="i"><use href="#al-t"/></svg><svg class="i"><use href="#al-m"/></svg><svg class="i"><use href="#al-b"/></svg></div>
      <div class="sep"></div>
      <div>Distribute Objects:</div>
      <div class="six"><svg class="i"><use href="#ds-t"/></svg><svg class="i"><use href="#ds-m"/></svg><svg class="i"><use href="#ds-b"/></svg><svg class="i"><use href="#ds-l"/></svg><svg class="i"><use href="#ds-c"/></svg><svg class="i"><use href="#ds-r"/></svg></div>
      <div class="sep"></div>
      <div class="alto"><span>Distribute Spacing:</span><i class="vr"></i><span>Align To:</span></div>
      <div class="spc"><svg class="i"><use href="#sp-v"/></svg><svg class="i"><use href="#sp-h"/></svg><div class="spin off w71"><em><svg><use href="#cu"/></svg><svg><use href="#cv"/></svg></em><span>0 px</span></div><i class="onbox"><svg class="i20"><use href="#al-ab"/></svg></i><svg class="i20"><use href="#al-sel"/></svg><svg class="i20"><use href="#al-key"/></svg></div>
    </div>
  </section>
  <section class="panel pathf">
    <div class="tabs"><b class="tab act w85">Pathfinder</b><svg class="burger"><use href="#burger"/></svg></div>
    <div class="stack body">
      <div>Shape Modes:</div>
      <div class="modes"><svg class="i"><use href="#p-unite"/></svg><svg class="i"><use href="#p-minus"/></svg><svg class="i"><use href="#p-inter"/></svg><svg class="i"><use href="#p-excl"/></svg><div class="big">Expand</div></div>
      <div>Pathfinders:</div>
      <div class="finders"><svg class="i"><use href="#p-div"/></svg><svg class="i"><use href="#p-trim"/></svg><svg class="i"><use href="#p-merge"/></svg><svg class="i"><use href="#p-crop"/></svg><svg class="i"><use href="#p-out"/></svg><svg class="i"><use href="#p-back"/></svg></div>
    </div>
  </section>
  <section class="panel layers">
    <div class="tabs"><b class="tab act w58">Layers</b><b class="tab w82">Artboards</b><b class="tab w96">Asset Export</b><svg class="burger"><use href="#burger"/></svg></div>
    <div class="lbox">
      <div class="find"><div class="search"><svg><use href="#mag"/></svg>Search All</div><svg class="i18"><use href="#funnel"/></svg></div>
      <div class="layer"><svg class="i20"><use href="#eye"/></svg><i class="lv"></i><i class="bar"></i><svg class="c"><use href="#cr"/></svg><i class="thumb"></i><span>Layer 1</span><i class="ring"></i><i class="selsq"></i></div>
    </div>
    <div class="lfoot"><span>1 Layer</span><svg class="i18"><use href="#collect"/></svg><svg class="i18"><use href="#export"/></svg><svg class="i18"><use href="#mag"/></svg><svg class="i18"><use href="#mask"/></svg><svg class="i18"><use href="#sublayer"/></svg><svg class="i18"><use href="#plus"/></svg><svg class="i18 faint"><use href="#trash"/></svg></div>
  </section>
</div>

<div class="dock d3">
  <div class="dockhead"><svg class="cc"><use href="#cc"/></svg></div>
  <section class="panel color">
    <div class="tabs"><b class="tab act w63"><svg class="ud"><use href="#ud"/></svg>Color</b><b class="tab w93">Color Guide</b><svg class="burger"><use href="#burger"/></svg></div>
    <div class="stack body">
      <div>Recent Colors</div>
      <div class="recent"></div>
      <div class="sep"></div>
      <div class="mix">
        <div class="mixl"><div class="defswap"><svg><use href="#deffs"/></svg><svg><use href="#swap"/></svg></div><svg class="fs"><use href="#fs"/></svg></div>
        <div class="mixr">
          <div><span>R</span><i class="ramp cy"><em></em></i><div class="fld">255</div></div>
          <div><span>G</span><i class="ramp mg"><em></em></i><div class="fld">255</div></div>
          <div><span>B</span><i class="ramp ye"><em></em></i><div class="fld">255</div></div>
        </div>
      </div>
      <div class="hexrow"><svg><use href="#slash"/></svg><i class="black"></i><i class="white"></i><div class="fld"><b>#</b>ffffff</div><svg class="i"><use href="#cube"/></svg></div>
      <div class="spec"><i></i></div>
    </div>
  </section>
  <section class="panel swatches">
    <div class="tabs"><b class="tab act w78">Swatches</b><b class="tab w68">Brushes</b><b class="tab w73">Symbols</b><svg class="burger"><use href="#burger"/></svg></div>
    <div class="stack body">
      <div class="swtop"><svg class="fs"><use href="#fs"/></svg><i class="kul"><svg class="i20"><use href="#kuler"/></svg></i><div class="views"><i><svg class="i20"><use href="#lines"/></svg></i><i class="on"><svg class="i20"><use href="#nine"/></svg></i></div></div>
      <div>Recent Colors</div>
      <div class="recent"></div>
      <div class="sep"></div>
      <div>Swatch Tiles</div>
      <div class="tiles"><div id="tiles"></div><div class="tscroll"><svg class="c"><use href="#cu"/></svg><svg class="c"><use href="#cv"/></svg></div></div>
      <div class="swfoot"><svg class="i20"><use href="#libs"/></svg><svg class="i18"><use href="#addlib"/></svg><svg class="i18"><use href="#kinds"/></svg><svg class="i18"><use href="#opts"/></svg><svg class="i18"><use href="#folder"/></svg><svg class="i18"><use href="#plus"/></svg><svg class="i18"><use href="#trash"/></svg></div>
    </div>
  </section>
  <section class="panel gradient">
    <div class="tabs"><b class="tab w83">Properties</b><b class="tab w75">Libraries</b><b class="tab act w80"><svg class="ud"><use href="#ud"/></svg>Gradient</b><svg class="burger"><use href="#burger"/></svg></div>
    <div class="stack body">
      <div class="gpre"><span>Presets:</span><div class="sel">Document Library<svg class="c"><use href="#cv"/></svg></div><svg class="i20"><use href="#menu"/></svg></div>
      <div class="gbox"><i class="g1"></i><i class="g1"></i><i class="g2"></i><i class="g3"></i><i class="g4"></i><i class="g5"><em></em></i><div class="gscroll"><svg class="c"><use href="#cu"/></svg><svg class="c"><use href="#cv"/></svg></div></div>
      <div class="gmain">
        <div class="gl"><div class="gprev"><i></i><em></em></div><svg class="fs"><use href="#fs"/></svg><svg class="rev"><use href="#rev"/></svg></div>
        <div class="gr">
          <div><label class="lit">Type:</label><div class="seg"><i><svg><use href="#grad"/></svg></i><i><svg viewBox="0 0 22 22"><path d="M1 2.500h20v17H1z" fill="url(#rad)" stroke="#bbb" stroke-width="1.300"/></svg></i><i><svg viewBox="0 0 22 22"><path d="M1 2.500h20v17H1z" fill="url(#free)" stroke="#bbb" stroke-width="1.300"/></svg></i></div></div>
          <div><label>Stroke:</label><div class="seg s2"><i><svg viewBox="0 0 22 22"><path d="M2 3h18v6H10v11H2z"/></svg></i><i><svg viewBox="0 0 22 22"><path d="M2 3h18v6H10v11H2z"/></svg></i><i><svg viewBox="0 0 22 22"><path d="M2 3h18v6H10v11H2z"/></svg></i></div></div>
          <div><label><svg class="i20"><use href="#angle"/></svg></label><div class="dd d88"><svg class="c"><use href="#cv"/></svg></div></div>
          <div><label><svg class="i"><use href="#aspect"/></svg></label><div class="dd d88"><svg class="c"><use href="#cv"/></svg></div></div>
          <div><label><i class="bdot"></i>Method:</label><div class="dd d150"><svg class="c"><use href="#cv"/></svg></div></div>
          <div><label></label><i class="cb dith"></i>Dither</div>
        </div>
      </div>
      <div class="gslide"><svg class="i20"><use href="#down"/></svg><i></i><svg class="i"><use href="#trash"/></svg></div>
      <div class="gop">
        <svg><use href="#picker"/></svg>
        <div><div><label>Opacity:</label><div class="dd d87"><svg class="c"><use href="#cv"/></svg></div></div><div><label>Location:</label><div class="dd d87"><svg class="c"><use href="#cv"/></svg></div></div></div>
      </div>
    </div>
  </section>
  <section class="panel appear">
    <div class="tabs"><b class="tab act w92">Appearance</b><svg class="burger"><use href="#burger"/></svg></div>
    <div class="abox">
      <div class="arow"><i class="thumb"></i><b>Compound Path</b></div>
      <div class="arow"><svg class="i20"><use href="#eye"/></svg><i class="av"></i><svg class="c"><use href="#cr"/></svg><u class="dot">Stroke:</u><svg class="asw" viewBox="0 0 20 20"><path d="M0 0h20v20H0z" fill="#eee"/><path d="M2.500 2.500h15v15h-15z" fill="#fff" stroke="#222"/><path d="M4 16 16 4" stroke="#c8102e" stroke-width="2.500"/></svg></div>
      <div class="arow"><svg class="i20"><use href="#eye"/></svg><i class="av"></i><svg class="c"><use href="#cr"/></svg><span>Fill:</span><svg class="asw" viewBox="0 0 20 20"><path d="M0 0h20v20H0z" fill="#eee"/><path d="M2.500 2.500h15v15h-15z" fill="#fff" stroke="#222"/></svg></div>
      <div class="arow"><svg class="i20 faint"><use href="#eye"/></svg><i class="av"></i><i></i><u class="dot">Opacity:</u><span>Default</span></div>
    </div>
    <div class="afoot"><svg class="i"><use href="#sq"/></svg><svg class="i"><use href="#sqf"/></svg><i class="fx">fx<small>.</small></i><svg class="i18"><use href="#nope"/></svg><svg class="i18 faint"><use href="#plus"/></svg><svg class="i18 faint"><use href="#trash"/></svg></div>
  </section>
</div>

</main>

<div class="dialog">
  <div class="dtitle">SVG Options</div>
  <div class="dbody">
    <div class="drow first"><label>SVG Profiles:</label><div class="sel w149 blue">SVG 1.1<svg class="c"><use href="#cv"/></svg></div></div>
    <fieldset class="f1">
      <legend>Fonts</legend>
      <div class="drow"><label>Type:</label><div class="sel w259">SVG<svg class="c"><use href="#cv"/></svg></div></div>
      <div class="drow"><label>Subsetting:</label><div class="sel w259">None (Use System Fonts)<svg class="c"><use href="#cv"/></svg></div></div>
    </fieldset>
    <fieldset class="f2">
      <legend>Options</legend>
      <div class="drow"><label>Image Location:</label><div class="sel w104">Embed<svg class="c"><use href="#cv"/></svg></div></div>
      <div class="drow keep"><label></label><i class="cb"></i>Preserve Illustrator Editing Capabilities</div>
    </fieldset>
    <fieldset class="f3">
      <legend>Description</legend>
      <div class="desc"><svg class="i20"><use href="#info"/></svg><span>Hold the cursor over a setting for additional information.</span></div>
    </fieldset>
    <div class="dbtns"><div class="pill">More Options</div><div class="pill">SVG Code...</div><i class="web"><svg class="i20"><use href="#globe"/></svg></i><div class="pill ok">OK</div><div class="pill cancel">Cancel</div></div>
  </div>
  <svg class="ring-ok" viewBox="0 0 142 63"><rect x="4.500" y="4.500" width="133" height="54" rx="9" fill="none" stroke="url(#gold)" stroke-width="9"/></svg>
</div>

<script type="text/javascript">
var recent = ['#fff','#54173f','#2b1b3d','#000','#3fa2f7','#fb00fb','#006b3c','#ff5722','#dba746','#cc2338','#9a5378','#f5f7f9','#e86a36','#f5f7f9'];

var tiles = [
'none','reg','paper','#000','#f00','#f0f020','#00f010','#00f8f8','#0808f8','#f808f8','#c1272d','#ed1c24','#f15a24','#f7931e','#fbb03b','#f0f020',
'#d9e021','#8cc63f','#39b54a','#1f9d55','#006837','#22b573','#00a99d','#29abe2','#0071bc','#2e3192','#1b1464','#662d91','#93278f','#9e005d','#d4145a','#ed1e79',
'#c7b299','#998675','#736357','#534741','#c69c6d','#a67c52','#8c6239','#754c24','#603813','#42210b',
'linear-gradient(90deg,#fff,#000)','linear-gradient(90deg,#cde,#0071bc)','linear-gradient(90deg,#f8a,#eee)','#f7931e','#fff8d8','#2e6bb0'
];

document.querySelectorAll('.recent').forEach(function(row) {
  for (var i in recent) {
    var s = document.createElement('i');
    s.style.background = recent[i];
    row.appendChild(s);
  }
});

var grid = document.getElementById('tiles');
for (var i in tiles) {
  var t = document.createElement('i');
  if (tiles[i] == 'none' || tiles[i] == 'reg' || tiles[i] == 'paper') {
    t.className = 'sw-' + tiles[i];
  } else {
    t.style.background = tiles[i];
  }
  grid.appendChild(t);
}
</script>

</body>

</html>
```

FILE: styles.css
```css
* {
  box-sizing: border-box;
}

body {
  margin: 0;
  width: 2463px;
  height: 1375px;
  overflow: hidden;
  background: #535353;
  border-top: 1px solid #3a3a3a;
  color: #d0d0d0;
  font: 12.5px "Open Sans", "Noto Sans", sans-serif;
  letter-spacing: -0.35px;
  white-space: nowrap;
  display: flex;
  flex-direction: column;
  position: relative;
}

svg {
  display: block;
  fill: currentColor;
  overflow: visible;
  flex: none;
}

i, em {
  font-style: normal;
  flex: none;
}

p { margin: 0; }

.defs { position: absolute; overflow: hidden; }
.glyph { font-family: "Liberation Serif", serif; font-weight: bold; text-anchor: middle; }

.i18 { width: 16px; height: 16px; color: #c8c8c8; }
.i20 { width: 19px; height: 19px; color: #c8c8c8; }
.i { width: 22px; height: 22px; color: #c8c8c8; }
.i24 { width: 24px; height: 24px; color: #c8c8c8; }
.i26 { width: 26px; height: 23px; color: #c8c8c8; }
.c { width: 12px; height: 12px; }
.cc { width: 8px; height: 7px; }
.fs { width: 38px; height: 38px; }
.faint { color: #707070; }
.white { background: #fff; }
.black { background: #000; }
.light { background: #e8e8e8; }
.vr { width: 1px; height: 30px; background: #444; }
.dot {
  text-decoration: none;
  border-bottom: 2px dotted #aaa;
  color: #eee;
  line-height: 16px;
}

/* rows are 26px tall, track sizes give the distance to the next row */
.stack {
  display: grid;
  align-content: start;
}

.stack > * {
  height: 26px;
  display: flex;
  align-items: center;
}

.stack > .sep {
  background: linear-gradient(#464646, #464646) center / 100% 2px no-repeat;
}

/* title bar */
.titlebar {
  height: 42px;
  padding-left: 18px;
  display: grid;
  grid-template-columns: 38px 40px 21px 41px 44px 61px 50px 59px 56px 49px 72px 46px 1507px 15px 40px 39px 39px 26px 50px 38px 110px;
  align-items: center;
  justify-items: start;
  font-size: 15.5px;
  color: #e6e6e6;
  border-bottom: 1px solid #3d3d3d;
  flex: none;
}

.titlebar > span { margin-top: -2px; }
.titlebar .vr { height: 24px; }

.ai {
  width: 20px;
  height: 20px;
  border-radius: 3px;
  background: #330000;
  color: #ff9a00;
  font-size: 12px;
  line-height: 20px;
  text-align: center;
}

.winbtns {
  align-self: start;
  width: 104px;
  height: 24px;
  border: 1px solid #666;
  border-top: 0;
  border-radius: 0 0 4px 4px;
  display: flex;
  color: #c4c4c4;
  font-weight: bold;
  font-size: 16px;
}

.winbtns span {
  flex: 1;
  display: flex;
  align-items: center;
  justify-content: center;
}

.winbtns span + span { border-left: 1px solid #666; }
.min { width: 12px; height: 5px; background: #c4c4c4; margin-top: 6px; }
.max { width: 13px; height: 11px; border: 3px solid #c4c4c4; }

/* control bar */
.control {
  height: 44px;
  padding-left: 11px;
  display: grid;
  grid-template-columns: 13px 114px 9px 54px 63px 47px 108px 143px 141px 53px 88px 43px 55px 14px 34px 14px 52px 32px 34px 37px 34px 32px 34px 8px 36px 19px 105px 18px 104px 24px 105px 35px 20px 104px 12px 39px 48px 13px 55px 14px 114px 45px 125px 31px 34px 51px 30px;
  align-items: center;
  justify-items: start;
  border-bottom: 2px solid #383838;
  flex: none;
}

.control .dot { font-weight: 600; letter-spacing: -0.5px; }
.control .lbl { font-size: 13px; letter-spacing: -0.4px; color: #c0c0c0; }
.grip { width: 3px; height: 24px; background: repeating-linear-gradient(#3c3c3c 0 1px, transparent 1px 3px); }

.combo {
  display: flex;
  height: 25px;
  align-items: center;
  border: 1px solid #666;
  border-radius: 2px;
  background: #454545;
  color: #eee;
}

.chip { width: 23px; height: 23px; margin-right: 5px; }
.combo .c { margin-right: 5px; }

.spin {
  width: 95px;
  height: 25px;
  display: flex;
  align-items: center;
  background: #454545;
  border: 1px solid #636363;
  border-radius: 3px;
  overflow: hidden;
  color: #eee;
  letter-spacing: -0.05px;
}

.spin em {
  width: 22px;
  height: 100%;
  border-right: 1px solid #5c5c5c;
  display: flex;
  flex-direction: column;
  align-items: center;
  justify-content: center;
  gap: 1px;
}

.spin em svg { width: 12px; height: 11px; }
.spin > span { flex: 1; min-width: 0; padding-left: 4px; overflow: hidden; }
.spin .cell { width: 22px; height: 25px; padding: 6px 5px; border-left: 1px solid #5c5c5c; }
.spin.off { background: #585858; border-color: #585858; color: #7e7e7e; }
.w101 { width: 101px; }
.w86 { width: 86px; }
.w71 { width: 71px; }

.varw { display: flex; align-items: center; gap: 6px; color: #6c6c6c; }
.varw i { width: 113px; height: 27px; background: #858585; }

.basic {
  display: flex;
  align-items: center;
  height: 26px;
  width: 131px;
  background: #454545;
  border: 1px solid #666;
  color: #eee;
}

.basic div { width: 107px; height: 24px; background: #e6e6e6; color: #111; display: flex; align-items: center; gap: 6px; padding-left: 6px; margin-right: 6px; font-size: 12px; letter-spacing: -0.2px; }
.basic div i { width: 61px; height: 3px; background: #000; }

.pair { display: flex; align-items: center; }
.pair .i { margin-right: 1px; }
.pair .lit { margin-left: 5px; color: #eee; }
.pair.wide .lit { margin-left: 12px; }
.doc-set .i { margin-right: -1px; }

.turnbtn {
  height: 28px;
  width: 95px;
  border: 1px solid #777;
  border-radius: 3px;
  display: flex;
  align-items: center;
  justify-content: center;
  gap: 5px;
  color: #fff;
}

/* workspace */
main {
  flex: 1;
  min-height: 0;
  display: flex;
  padding-left: 5px;
}

.tools {
  width: 52px;
  border-left: 1px solid #3a3a3a;
  border-right: 2px solid #3a3a3a;
  height: 1283px;
}

.toolhead { height: 14px; background: #424242; padding: 4px 0 0 7px; }
.toolgrip { height: 4px; margin: 5px 12px 0; background: repeating-linear-gradient(90deg, #3c3c3c 0 1px, transparent 1px 3px); }

.toolgrid {
  padding-top: 16px;
  grid-template-rows: 24px 31px 30px 16px 12px 26px 30px 30px 31px 16px 12px 26px 30px 31px 30px 30px 29px 17px 12px 25px 32px 29px 17px 12px 26px 30px 17px 12px 26px 30px 30px 31px 16px 12px 26px 30px 17px 14px 33px 33px 24px 30px 41px 35px 37px;
  border-bottom: 1px solid #3a3a3a;
}

.toolgrid > * { justify-content: center; position: relative; }
.toolgrid p { font-size: 11.5px; margin-top: -1px; }
.toolgrid > .sep { margin: 0 5px; background-size: 100% 1px; }
.toolgrid .on { background: #2b2b2b; margin: 0 7px 0 6px; border-radius: 2px; }
.toolgrid svg { margin: auto; }
.toolgrid .i { width: 20px; height: 20px; }
.toolgrid .fs { position: relative; left: -1px; }

.fly::after {
  content: "";
  position: absolute;
  right: 9px;
  bottom: 1px;
  border-left: 4px solid transparent;
  border-bottom: 4px solid #c8c8c8;
}

.new::before {
  content: "";
  position: absolute;
  left: 10px;
  top: 1px;
  width: 9px;
  height: 9px;
  border-radius: 50%;
  background: #2680eb;
}

.defswap { display: flex; color: #c8c8c8; }
.defswap svg { width: 16px; height: 14px; }
.defswap svg + svg { width: 13px; }
.strip > * { width: 11px; height: 10px; outline: 1px solid #222; }
.toolgrid .strip svg { margin: 0; }
.fade { background: linear-gradient(90deg, #fff, #111); }

.toolgrid .aibtn { background: #1473e6; height: 34px; margin: -4px 7px 0 6px; border-radius: 2px; }
.aibtn svg { color: #fff; }

.doc { width: 1340px; display: flex; flex-direction: column; height: 1283px; }
.doctabs { height: 35px; background: #424242; display: flex; flex: none; border-bottom: 1px solid #3a3a3a; }

.doctab {
  width: 322px;
  background: #535353;
  border-right: 1px solid #3a3a3a;
  color: #fff;
  font-weight: 600;
  font-size: 13.5px;
  letter-spacing: 0.18px;
  display: flex;
  align-items: center;
  padding-left: 12px;
}

.doctab b { font-size: 18px; margin-left: 12px; line-height: 20px; }
.docrow { display: flex; flex: 1; min-height: 0; }
.canvas { width: 1320px; background: #606060; position: relative; overflow: hidden; }
.art { width: 1320px; height: 1192px; }
.abname { font-size: 12.5px; letter-spacing: -0.1px; fill: #d8d8d8; }

.vscroll {
  width: 20px;
  background: #4a4a4a;
  display: flex;
  flex-direction: column;
  align-items: center;
  color: #aaa;
  padding: 5px 0 0;
}

.vscroll i { width: 18px; height: 32px; border-radius: 9px; background: #606060; margin: 580px 0 578px; }

.ctxbar {
  position: absolute;
  left: 20px;
  bottom: 7px;
  width: 465px;
  height: 44px;
  background: #535353;
  border: 1px solid #3d3d3d;
  border-radius: 5px;
  display: flex;
  align-items: center;
  color: #eee;
  font-size: 14.5px;
  letter-spacing: -0.25px;
}

.handle { width: 5px; height: 33px; border-radius: 2px; background: #999; margin: 0 13px 0 6px; }
.ctxbar .btn { height: 34px; border: 1px solid #686868; border-radius: 3px; display: flex; align-items: center; justify-content: center; gap: 6px; margin-right: 5px; }
.ctxbar .btn:nth-child(2) { width: 35px; }
.ctxbar .btn:nth-child(3) { width: 119px; }
.ctxbar .btn:nth-child(4) { width: 115px; }
.ctxbar .sw { width: 22px; height: 22px; margin: 0 11px 0 10px; }
.ctxbar > .i { margin-right: 16px; }

.ctxbar .btn:nth-child(2)::before {
  content: "";
  position: absolute;
  width: 9px;
  height: 9px;
  border-radius: 50%;
  background: #2680eb;
  margin: -13px 15px 0 0;
}

.hint {
  height: 31px;
  flex: none;
  border-top: 2px solid #3f3f3f;
  background: #535353;
  display: flex;
  align-items: center;
  padding: 0 0 2px 6px;
  letter-spacing: -0.08px;
  color: #ccc;
}

.hint i { margin: 0 8px; }

.q {
  width: 18px;
  height: 18px;
  border-radius: 50%;
  background: #c8c8c8;
  color: #444;
  text-align: center;
  line-height: 18px;
  margin-right: 13px;
}

.status {
  height: 22px;
  flex: none;
  display: flex;
  align-items: flex-start;
  overflow: hidden;
  padding-left: 4px;
}

.sz { width: 87px; margin-right: 4px; }
.sr { width: 87px; margin-right: 13px; }
.sa { width: 74px; margin: 0 12px 0 -6px; }
.nav { color: #757575; width: 22px; font-size: 10px; line-height: 22px; }
.mode { width: 253px; padding-right: 9px; text-align: center; line-height: 25px; font-size: 12px; letter-spacing: -0.1px; border-left: 1px solid #444; }
.play { font-size: 11px; width: 21px; line-height: 22px; color: #ddd; }
.hscroll { flex: 1; height: 22px; background: #4a4a4a; display: flex; align-items: center; color: #bbb; padding: 0 25px 0 0; }
.hscroll i { width: 31px; height: 18px; border-radius: 9px; background: #686868; margin: 0 auto 0 312px; }

/* docks and panels */
.dock { border-left: 3px solid #383838; height: 1284px; background: #535353; }
.d1 { width: 350px; }
.d2 { width: 393px; }
.d3 { width: 318px; border-right: 1px solid #383838; }
.dockhead { height: 15px; background: #424242; border-bottom: 1px solid #303030; display: flex; justify-content: flex-end; padding: 4px 8px 0 0; }

.panel { border-bottom: 3px solid #363636; }
.trace { height: 1268px; border: 0; }
.transform { height: 446px; }
.align { height: 257px; }
.pathf { height: 175px; }
.layers { height: 390px; border: 0; }
.color { height: 319px; }
.swatches { height: 243px; }
.gradient { height: 471px; }
.appear { height: 235px; border: 0; }

.tabs { height: 34px; background: #424242; display: flex; align-items: stretch; border-bottom: 1px solid #383838; }

.tab {
  display: flex;
  align-items: center;
  border-right: 1px solid #383838;
  padding-left: 12px;
  font-size: 12px;
  font-weight: 600;
  color: #a2a2a2;
  letter-spacing: -0.3px;
}

.tab.act { background: #535353; color: #fff; height: 34px; }
.ud { width: 8px; height: 12px; margin: 0 6px 0 -6px; color: #aaa; }
.burger { width: 13px; height: 12px; margin: auto 7px auto auto; color: #aaa; }
.w93 { width: 93px; } .w89 { width: 90px; } .w61 { width: 61px; } .w85 { width: 85px; }
.w58 { width: 59px; } .w82 { width: 82px; } .w96 { width: 96px; } .w63 { width: 63px; }
.w78 { width: 78px; } .w68 { width: 68px; } .w73 { width: 73px; } .w83 { width: 83px; }
.w75 { width: 75px; } .w80 { width: 80px; } .w92 { width: 92px; }

.cb { width: 15px; height: 15px; border: 1px solid currentColor; border-radius: 2px; margin-right: 6px; }
.cb.ck { background: #808080; position: relative; }
.cb.ck::after { content: ""; position: absolute; left: 4px; top: 1px; width: 4px; height: 7px; border: solid #444; border-width: 0 2px 2px 0; transform: rotate(40deg); }

.fld {
  width: 73px;
  height: 25px;
  background: #454545;
  border: 1px solid #636363;
  border-radius: 3px;
  color: #eee;
  padding-left: 5px;
  line-height: 23px;
  overflow: hidden;
  letter-spacing: -0.1px;
}

.dd {
  width: 221px;
  height: 26px;
  background: #585858;
  border-radius: 3px;
  display: flex;
  align-items: center;
  justify-content: space-between;
  padding: 0 6px 0 9px;
  color: #7e7e7e;
}

/* image trace */
.trace .body {
  padding-top: 18px;
  color: #7e7e7e;
  grid-template-rows: 22px 23px 36px 35px 32px 32px 21px 27px 32px 21px 27px 21px 26px 21px 29px 32px 28px 29px 29px 22px 21px 27px 25px 25px 25px 24px 23px 22px 20px 19px 20px 19px 26px;
}

.trace svg { color: #7e7e7e; }
.trace .sep { margin: 0 13px 0 12px; }
.presets { padding-left: 74px; gap: 16px; }
.presets .i { width: 20px; height: 20px; }
.frm label { width: 72px; text-align: right; margin-right: 4px; }
.frm > .i20 { margin-left: 12px; }
.foc { padding-left: 6px; position: relative; width: 220px; }
.foc::before { content: ""; position: absolute; left: 0; top: 0; width: 198px; height: 26px; border: 1px solid #999; border-right: 0; }

.rail { width: 196px; height: 3px; background: #676767; margin-right: 8px; }
.rail i { display: block; width: 15px; height: 15px; border-radius: 50%; border: 2.500px solid #7e7e7e; background: #535353; margin-top: -6px; box-shadow: 0 0 0 2px #535353; }
.rail .k0 { margin-left: 0; }
.rail .k26 { margin-left: 44px; }
.rail .k49 { margin-left: 90px; }
.rail .k50 { margin-left: 91px; }
.rail .k74 { margin-left: 138px; }
.val { width: 48px; height: 25px; border-radius: 3px; background: #585858; padding-left: 6px; line-height: 25px; }
.ends { justify-content: space-between; margin: 0 72px 0 76px; }
.ends.sm { margin: 0 81px 0 77px; }
.head { color: #ddd; }
.head::after { content: ""; flex: 1; height: 1px; background: #464646; margin: 0 18px 0 6px; }
.adv::after { margin: 0 13px 0 0; }
.adv { padding-left: 19px; }
.tri { border: 7px solid transparent; border-top: 8px solid #ccc; border-bottom: 0; margin-right: 6px; }
.in { padding-left: 26px; }
.in .cb { margin-left: 1px; }
.in .gap { margin-left: 9px; }
.in .spin { width: 88px; height: 27px; margin-left: 7px; }
.two { display: flex; height: 29px; border: 1px solid #666; }
.two i { width: 30px; padding: 4px 0 0 5px; }
.two i + i { border-left: 1px solid #5e5e5e; }
.smooth span { width: 51px; }
.smooth .rail { width: 187px; margin-right: 7px; }
.ign { width: 41px; height: 23px; background: #a6a8a8; border: 1px solid #fff; margin: 0 15px 0 14px; }
.infos { display: grid; grid-template-columns: 34px 91px 93px 50px; }
.infos span { display: flex; align-items: center; }
.infos svg { width: 17px; height: 17px; margin-right: 4px; }
.split .big { margin: 0 19px 0 auto; width: 175px; }
.big { height: 24px; line-height: 25px; background: #585858; border-radius: 3px; text-align: center; color: #7e7e7e; }
.trace .foot svg { color: #ccc; margin: 0 10px 0 1px; }

/* transform */
.d2 .body { padding-left: 6px; }
.d2 .sep { margin-right: 7px; }
.transform .body { padding-top: 7px; grid-template-rows: 99px 22px 105px 105px 17px 24px 26px; }
.transform .xy { height: 92px; align-items: flex-start; }
.xy > .i24 { margin-top: 18px; }
.xy > .i { margin: 18px 0 0 10px; }
.xyf { display: grid; grid-template-columns: 34px 73px 27px 73px; grid-auto-rows: 26px; row-gap: 6.500px; align-items: center; }
.xyf label { display: flex; justify-content: flex-end; align-items: center; padding-right: 5px; }
.tt .turnbtn { width: 185px; margin-left: 58px; }
.noshape { justify-content: center; color: #7a7a7a; }
.chk { color: #eee; letter-spacing: -0.25px; }
.chk .cb { border-color: #c8c8c8; margin-left: 1px; }

/* align and pathfinder */
.align .body { padding-top: 4px; grid-template-rows: 33px 23px 18px 33px 23px 18px 32px 26px; }
.stack > .six { display: grid; grid-template-columns: 45px 46px 165px 44px 46px 22px; padding-left: 6px; }
.alto .vr { height: 60px; margin: 38px 58px 0 104px; background: #464646; }
.stack > .spc { display: grid; grid-template-columns: 38px 34px 191px 44px 40px 22px; align-items: center; padding-left: 6px; }
.stack > .spc > .spin { justify-self: start; }
.onbox { width: 30px; height: 30px; background: #2b2b2b; border-radius: 2px; display: flex; align-items: center; justify-content: center; }
.spc > .i20 { margin-left: 1px; }
.pathf .body { padding-top: 4px; grid-template-rows: 33px 32px 33px 26px; }
.stack > .modes { display: grid; grid-template-columns: 46px 46px 46px 42px 89px; padding-left: 6px; }
.stack > .finders { display: grid; grid-template-columns: 47px 46px 46px 48px 47px 22px; padding-left: 9px; }

/* layers */
.lbox { margin: 8px 7px 0 6px; border: 1px solid #5e5e5e; height: 320px; }
.find { display: flex; align-items: center; height: 44px; padding: 0 0 6px 7px; }
.search { width: 333px; height: 29px; background: #454545; border: 1px solid #666; border-radius: 3px; display: flex; align-items: center; color: #6a6a6a; font-size: 14px; letter-spacing: -0.1px; margin-right: 12px; }
.search svg { width: 15px; height: 15px; color: #ccc; margin: 0 13px 0 7px; }
.find .i18 { width: 17px; height: 17px; }
.layer { height: 26px; background: #50647c; display: flex; align-items: center; color: #eee; position: relative; }
.layer > .i20 { margin-left: 4px; }
.lv { width: 1px; height: 24px; background: #445468; margin: 0 26px 0 4px; }
.bar { width: 3px; height: 22px; background: #4480ff; margin-right: 7px; }
.layer .thumb { margin: 0 6px 0 14px; }
.thumb { width: 22px; height: 22px; background: #fff; outline: 1px solid #000; }
.ring { width: 10px; height: 10px; border: 1.500px solid #ccc; border-radius: 50%; margin: 0 7px 0 auto; }
.selsq { width: 10px; height: 10px; background: #4480ff; border: 1px solid #000; margin-right: 10px; }
.layer::after { content: ""; position: absolute; right: 0; top: 0; border-top: 8px solid #ccc; border-left: 8px solid transparent; }
.lfoot { height: 27px; display: grid; grid-template-columns: 143px 31px 32px 31px 33px 33px 33px 18px; align-items: center; padding-left: 6px; }

/* color */
.d3 .body { padding-left: 6px; }
.d3 .sep { margin-right: 8px; background-size: 100% 1px; }
.color .body { padding-top: 4px; grid-template-rows: 27px 17px 16px 135px 43px 30px; }

.recent { gap: 1.700px; margin-right: 8px; }
.stack > .recent { height: 19px; margin-top: 3px; border: 1px solid #5e5e5e; padding-left: 1px; }
.recent i { width: 17px; height: 17px; }

.stack > .mix { height: 130px; align-items: flex-start; }
.mixl { width: 60px; padding-left: 1px; }
.mixl .defswap { gap: 9px; margin-bottom: 7px; align-items: center; }
.mixl .defswap svg + svg { width: 14px; }
.mixr { display: grid; grid-auto-rows: 41.500px; font-size: 13px; }
.mixr > div { height: 26px; display: grid; grid-template-columns: 23px 137px 43px; align-items: center; }
.mixr .fld { width: 44px; }
.ramp { width: 126px; height: 5px; position: relative; }
.ramp em { position: absolute; right: -6px; top: 4px; width: 11px; height: 10px; background: #ccc; clip-path: polygon(50% 0, 100% 40%, 100% 100%, 0 100%, 0 40%); }
.cy { background: linear-gradient(90deg, #00ffff, #fff); }
.mg { background: linear-gradient(90deg, #ff00ff, #fff); }
.ye { background: linear-gradient(90deg, #f2f20c, #fff); }

.hexrow > svg:first-child, .hexrow > i { width: 16px; height: 16px; outline: 1px solid #222; }
.hexrow { padding-left: 1px; }
.hexrow .fld { width: 81px; height: 28px; margin: 0 10px 0 135px; display: flex; align-items: center; gap: 6px; }
.hexrow .fld b { font-size: 19px; font-weight: 600; color: #ccc; }
.hexrow .i { width: 20px; height: 20px; }

.spec i {
  width: 284px;
  height: 37px;
  border: 1px solid #222;
  margin-left: 1px;
  background: linear-gradient(#fff, rgba(255,255,255,0) 50%, rgba(0,0,0,0) 50%, #000), linear-gradient(90deg, #f00, #ee0 17%, #0e0 33%, #0ff 50%, #00f 67%, #f0f 83%, #f00);
}

/* swatches */
.swatches .body { padding-top: 13px; grid-template-rows: 35px 27px 17px 18px 37px 34px 20px; }
.stack > .swtop { display: grid; grid-template-columns: 43px 195px 61px; align-items: center; padding-left: 1px; align-content: center; }
.kul { width: 33px; height: 32px; border: 1px solid #777; border-radius: 3px; display: flex; align-items: center; justify-content: center; }
.views { display: flex; border: 1px solid #636363; border-radius: 2px; }
.views i { width: 30px; height: 35px; display: flex; align-items: center; justify-content: center; }
.views .on { background: #2b2b2b; }
.views .on svg { color: #fff; }
.stack > .tiles { height: 43px; margin: -8px 8px 0 0; border: 1px solid #5e5e5e; align-items: stretch; }
#tiles { width: 282px; padding-left: 1px; display: grid; grid-template-columns: repeat(16, 17.500px); grid-auto-rows: 18px; overflow: hidden; }
#tiles i { width: 16px; height: 16px; }
.sw-none { background: linear-gradient(135deg, #fff 44%, #f01414 45% 55%, #fff 56%); }
.sw-reg { background: radial-gradient(#555 0 10%, #eee 11% 25%, #555 26% 35%, #eee 36% 48%, #555 49% 58%, #eee 59%); }
.sw-paper { background: #fff; box-shadow: inset 0 0 0 1px #fff, inset 0 0 0 2px #000; }
.tscroll { width: 14px; display: flex; flex-direction: column; justify-content: space-between; color: #999; background: #4a4a4a; padding: 1px; }
.stack > .swfoot { display: grid; grid-template-columns: 35px 84px 35px 32px 33px 32px 18px; padding-left: 6px; }

/* gradient */
.gradient .body { padding-top: 9px; grid-template-rows: 54px 52px 208px 46px 33px; }
.stack > .gpre { display: grid; grid-template-columns: 52px 225px 20px; align-items: center; }
.sel { width: 211px; height: 25px; background: #454545; border: 1px solid #636363; border-radius: 3px; color: #fff; display: flex; align-items: center; justify-content: space-between; padding: 0 5px 0 7px; }
.stack > .gbox { height: 61px; margin: -17px 8px 0 0; border: 1px solid #5e5e5e; gap: 1.300px; padding: 0 0 0 1px; align-items: flex-start; }
.gbox i { width: 40px; height: 40px; }
.gscroll { align-self: stretch; margin-left: auto; padding: 1px; display: flex; flex-direction: column; justify-content: space-between; color: #616161; }
.g1 { background: linear-gradient(90deg, #fff, #000); }
.g2 { background: linear-gradient(90deg, #cfe0f8, #5aaae8 40%, #0a8ad6 60%, #0562a8); }
.g3 { background: linear-gradient(90deg, #ff7bac, #ffb3cd 40%, rgba(255,255,255,.2)), repeating-conic-gradient(#ccc 0 25%, #fff 0 50%) 0 0 / 6px 6px; }
.g4 { background: radial-gradient(circle, #fff, #fcd49a 20%, #f7931e 50%); }
.g5 { background: #fff; padding: 3px; }
.g5 em { display: block; height: 34px; border: 2px solid #e8c83c; border-radius: 50%; background: repeating-conic-gradient(#ccc 0 25%, #fff 0 50%) 0 0 / 6px 6px; }

.stack > .gmain { height: 190px; align-items: flex-start; color: #7a7a7a; }
.gl { width: 55px; }
.gl .fs { margin: 6px 0 15px 1px; }
.gprev { display: flex; align-items: center; gap: 4px; }
.gprev i { width: 40px; height: 40px; border: 1px solid #222; background: linear-gradient(90deg, #fff, #000); }
.gprev em { border: 4px solid transparent; border-top: 4px solid #bbb; border-bottom: 0; }
.rev { width: 20px; height: 20px; margin-left: 8px; color: #777; }
.gr { display: grid; grid-template-rows: 35px 33px 33px 33px 28px 26px; }
.gr > div, .gop > div > div { height: 26px; display: flex; align-items: center; }
.gr label { width: 61px; margin-right: 4px; display: flex; justify-content: flex-end; align-items: center; }
.gr label svg { color: #8a8a8a; }
.gr .lit { color: #ccc; }
.d88 { width: 88px; } .d150 { width: 150px; } .d87 { width: 87px; }
.gradient .dd { justify-content: flex-end; }
.seg { display: flex; border: 1px solid #666; border-radius: 2px; }
.seg i { width: 30.500px; height: 28px; display: flex; align-items: center; justify-content: center; }
.seg i + i { border-left: 1px solid #606060; }
.seg svg { width: 21px; height: 21px; color: #bbb; }
.s2 i { width: 28px; height: 24px; }
.s2 svg { width: 18px; height: 18px; color: #707070; }
.bdot { width: 8px; height: 8px; border-radius: 50%; background: #1473e6; margin-right: 6px; }
.dith { margin-left: 2px; }
.stack > .gslide { display: grid; grid-template-columns: 40px 230px 22px; align-items: center; padding-left: 8px; color: #777; }
.gslide svg, .gop > svg { color: #777; }
.gslide svg:last-child { width: 16px; height: 18px; }
.gslide i { width: 212px; height: 21px; border: 1px solid #222; background: linear-gradient(90deg, #fff, #000); }
.stack > .gop { height: 60px; color: #7a7a7a; }
.gop > svg { width: 26px; height: 22px; margin: 0 0 0 8px; }
.gop > div { display: grid; gap: 7px; }
.gop label { width: 64px; text-align: right; margin-right: 5px; }

/* appearance */
.abox { margin: 8px 8px 0 6px; height: 167px; border: 1px solid #5e5e5e; }
.arow { height: 31.500px; border-bottom: 1px solid #5e5e5e; display: grid; grid-template-columns: 26px 5px 27px 54px 60px; align-items: center; padding-left: 5px; color: #ccc; justify-items: start; }
.arow:first-child { grid-template-columns: 58px auto; }
.arow b { font-size: 13px; color: #ddd; }
.arow .c { color: #eee; }
.av { width: 2px; height: 30px; background: #3e3e3e; }
.asw { width: 20px; height: 20px; outline: 1px solid #222; }
.arow .thumb { height: 23px; }
.afoot { display: grid; grid-template-columns: 33px 33px 120px 34px 31px 18px; align-items: center; height: 26px; padding-left: 11px; }
.fx { font: italic 18px "Liberation Serif", serif; }

/* export dialog */
.dialog {
  position: absolute;
  left: 766px;
  top: 288px;
  width: 586px;
  height: 552px;
  background: #535353;
  box-shadow: 0 12px 34px rgba(0,0,0,.42), 0 0 1px 1px #666;
  font-size: 14px;
  letter-spacing: 0;
}

.dtitle { height: 37px; background: #f3f3f3; color: #111; line-height: 37px; padding-left: 10px; font-size: 15px; letter-spacing: -0.35px; }
.dbody { padding: 0 19px; color: #c8c8c8; }
.drow { display: flex; align-items: center; height: 26px; }
.drow label { width: 120px; text-align: right; margin-right: 5px; }
.first { margin: 27px 0 0; }
.first label { letter-spacing: -0.3px; }
.dialog .sel { height: 27px; }
.w149 { width: 149px; } .w259 { width: 260px; } .w104 { width: 105px; }
.dialog .blue { border: 2px solid #4e94ec; background: #5a5a5a; padding-left: 6px; }
.dbody fieldset { margin: 0; padding: 0; border: 1px solid #484848; }
.dbody legend { margin-left: 8px; padding: 0 4px; line-height: 18px; letter-spacing: -0.1px; }
.f1 .drow, .f2 .drow { margin-left: -1px; }
.dbody .f1 { height: 115px; margin-top: 9px; }
.f1 .drow:nth-child(2) { margin-top: 14px; }
.f1 .drow:nth-child(3) { margin-top: 12px; }
.dbody .f2 { height: 107px; margin-top: 9px; }
.f2 .drow:nth-child(2) { margin-top: 13px; }
.f2 .keep { color: #fff; margin-top: 9px; letter-spacing: 0.05px; }
.keep .cb { border-color: #ccc; margin-left: 1px; height: 16px; }
.dbody .f3 { height: 115px; margin-top: 9px; }
.desc { display: flex; margin: 15px 0 0 13px; font-size: 13px; gap: 12px; align-items: flex-start; letter-spacing: -0.55px; }
.desc span { margin-top: 5px; }
.dbtns { display: flex; margin-top: 28px; align-items: center; color: #fff; letter-spacing: -0.25px; }
.pill { width: 116px; height: 33px; border: 2px solid #eee; border-radius: 17px; display: flex; align-items: center; justify-content: center; margin-right: 12px; }
.web { width: 32px; height: 32px; background: #484848; border: 1px solid #777; border-radius: 2px; display: flex; align-items: center; justify-content: center; margin-right: 24px; }
.ok { border-width: 3px; margin-right: 3px; }
.cancel { margin: 0; width: 118px; }
.ring-ok { position: absolute; left: 318px; top: 467px; width: 142px; height: 63px; }
```
